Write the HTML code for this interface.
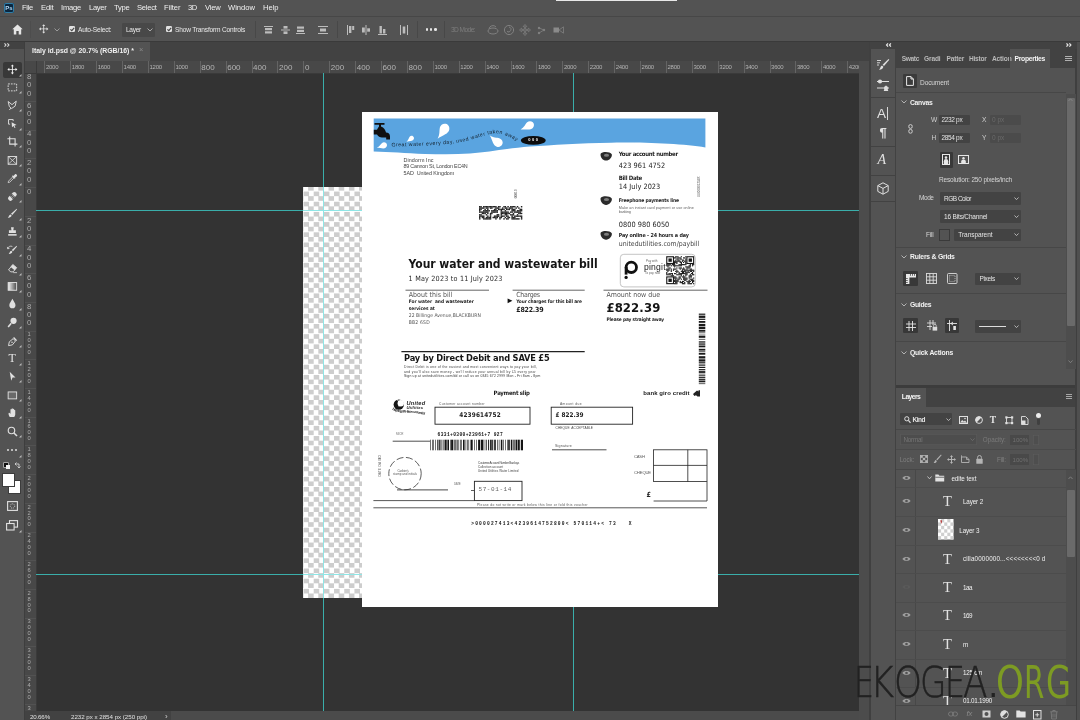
<!DOCTYPE html><html><head><meta charset="utf-8"><title>Italy id.psd</title><style>html,body{margin:0;padding:0}body{width:1080px;height:720px;position:relative;overflow:hidden;background:#535353;font-family:"Liberation Sans",sans-serif}svg{overflow:visible}#root{position:absolute;left:0;top:0;width:1080px;height:720px;will-change:transform;transform:translateZ(0);filter:blur(0.5px)}</style></head><body><div id="root"><div style="position:absolute;left:0px;top:0px;width:1080px;height:17px;background:#535353;"></div>
<div style="position:absolute;left:0px;top:16px;width:1080px;height:1px;background:#474747;"></div>
<div style="position:absolute;left:3.5px;top:3.2px;width:10px;height:10px;background:#0a2740;border-radius:2px;box-shadow:0 0 0 1px #2f7ea8 inset;"></div>
<span id="t1" style="position:absolute;left:5.2px;top:4.95px;font:normal bold 6px/1.15 'Liberation Sans',sans-serif;color:#b9dcf5;white-space:pre;">Ps</span>
<span id="t2" style="position:absolute;left:22px;top:3.93px;font:normal normal 7.6px/1.15 'Liberation Sans',sans-serif;color:#f0f0f0;white-space:pre;letter-spacing:-0.312px;">File</span>
<span id="t3" style="position:absolute;left:41px;top:3.93px;font:normal normal 7.6px/1.15 'Liberation Sans',sans-serif;color:#f0f0f0;white-space:pre;letter-spacing:-0.148px;">Edit</span>
<span id="t4" style="position:absolute;left:61px;top:3.93px;font:normal normal 7.6px/1.15 'Liberation Sans',sans-serif;color:#f0f0f0;white-space:pre;letter-spacing:-0.222px;">Image</span>
<span id="t5" style="position:absolute;left:89px;top:3.93px;font:normal normal 7.6px/1.15 'Liberation Sans',sans-serif;color:#f0f0f0;white-space:pre;letter-spacing:-0.300px;">Layer</span>
<span id="t6" style="position:absolute;left:114px;top:3.93px;font:normal normal 7.6px/1.15 'Liberation Sans',sans-serif;color:#f0f0f0;white-space:pre;letter-spacing:-0.242px;">Type</span>
<span id="t7" style="position:absolute;left:137px;top:3.93px;font:normal normal 7.6px/1.15 'Liberation Sans',sans-serif;color:#f0f0f0;white-space:pre;letter-spacing:-0.268px;">Select</span>
<span id="t8" style="position:absolute;left:164px;top:3.93px;font:normal normal 7.6px/1.15 'Liberation Sans',sans-serif;color:#f0f0f0;white-space:pre;letter-spacing:-0.062px;">Filter</span>
<span id="t9" style="position:absolute;left:188px;top:3.93px;font:normal normal 7.6px/1.15 'Liberation Sans',sans-serif;color:#f0f0f0;white-space:pre;letter-spacing:-0.359px;">3D</span>
<span id="t10" style="position:absolute;left:205px;top:3.93px;font:normal normal 7.6px/1.15 'Liberation Sans',sans-serif;color:#f0f0f0;white-space:pre;letter-spacing:-0.207px;">View</span>
<span id="t11" style="position:absolute;left:228px;top:3.93px;font:normal normal 7.6px/1.15 'Liberation Sans',sans-serif;color:#f0f0f0;white-space:pre;letter-spacing:-0.003px;">Window</span>
<span id="t12" style="position:absolute;left:263px;top:3.93px;font:normal normal 7.6px/1.15 'Liberation Sans',sans-serif;color:#f0f0f0;white-space:pre;letter-spacing:-0.031px;">Help</span>
<div style="position:absolute;left:556px;top:0px;width:121px;height:1px;background:#e8e8e8;"></div>
<div style="position:absolute;left:0px;top:17px;width:1080px;height:24px;background:#535353;"></div>
<svg style="position:absolute;left:12px;top:24px;" width="11" height="11" viewBox="0 0 11 11"><path d="M5.5 0.5 L0.3 5.3 H1.8 V10.5 H4.3 V7 H6.7 V10.5 H9.2 V5.3 H10.7 Z" fill="#e6e6e6"/></svg>
<div style="position:absolute;left:30px;top:21px;width:1px;height:17px;background:#4d4d4d;"></div>
<svg style="position:absolute;left:39px;top:24.2px;" width="9.4" height="9.8" viewBox="0 0 11 11"><path d="M5.5 0 L7.3 2.2 H6 V5 H8.8 V3.7 L11 5.5 L8.8 7.3 V6 H6 V8.8 H7.3 L5.5 11 L3.7 8.8 H5 V6 H2.2 V7.3 L0 5.5 L2.2 3.7 V5 H5 V2.2 H3.7 Z" fill="#e0e0e0"/></svg>
<svg style="position:absolute;left:54px;top:28px;" width="6" height="4" viewBox="0 0 6 4"><path d="M0.5 0.5 L3 3 L5.5 0.5" stroke="#9a9a9a" stroke-width="1" fill="none"/></svg>
<div style="position:absolute;left:69px;top:26px;width:6px;height:6.4px;background:#e2e2e2;border-radius:1.2px;"></div>
<svg style="position:absolute;left:69px;top:26px;" width="6" height="6.4" viewBox="0 0 6 6.4"><path d="M1.4 3.3 L2.8 4.7 L5.2 1.8" stroke="#444" stroke-width="1.1" fill="none"/></svg>
<span id="t13" style="position:absolute;left:78px;top:25.81px;font:normal normal 6.6px/1.15 'Liberation Sans',sans-serif;color:#e8e8e8;white-space:pre;letter-spacing:-0.202px;">Auto-Select:</span>
<div style="position:absolute;left:122px;top:23px;width:33px;height:13.5px;background:#484848;border-radius:1px;"></div>
<span id="t14" style="position:absolute;left:126px;top:26.01px;font:normal normal 6.6px/1.15 'Liberation Sans',sans-serif;color:#e8e8e8;white-space:pre;letter-spacing:-0.300px;">Layer</span>
<svg style="position:absolute;left:147px;top:28px;" width="6" height="4" viewBox="0 0 6 4"><path d="M0.5 0.5 L3 3 L5.5 0.5" stroke="#aaa" stroke-width="1" fill="none"/></svg>
<div style="position:absolute;left:166px;top:26px;width:6px;height:6.4px;background:#e2e2e2;border-radius:1.2px;"></div>
<svg style="position:absolute;left:166px;top:26px;" width="6" height="6.4" viewBox="0 0 6 6.4"><path d="M1.4 3.3 L2.8 4.7 L5.2 1.8" stroke="#444" stroke-width="1.1" fill="none"/></svg>
<span id="t15" style="position:absolute;left:175px;top:25.81px;font:normal normal 6.6px/1.15 'Liberation Sans',sans-serif;color:#e8e8e8;white-space:pre;letter-spacing:-0.191px;">Show Transform Controls</span>
<div style="position:absolute;left:255px;top:21px;width:1px;height:17px;background:#484848;"></div>
<svg style="position:absolute;left:264px;top:24.5px;" width="10" height="10" viewBox="0 0 10 10"><rect x="0" y="1" width="9" height="1" fill="#bcbcbc"/><rect x="1" y="3" width="7" height="2.2" fill="#bcbcbc"/><rect x="1" y="6.3" width="7" height="2.2" fill="#bcbcbc"/></svg>
<svg style="position:absolute;left:280.5px;top:24.5px;" width="10" height="10" viewBox="0 0 10 10"><rect x="0" y="4.5" width="9" height="1" fill="#bcbcbc"/><rect x="2.5" y="1" width="4" height="2.6" fill="#bcbcbc"/><rect x="2.5" y="6.4" width="4" height="2.6" fill="#bcbcbc"/></svg>
<svg style="position:absolute;left:296px;top:24.5px;" width="10" height="10" viewBox="0 0 10 10"><rect x="0" y="8" width="9" height="1" fill="#bcbcbc"/><rect x="1" y="1.5" width="7" height="2.2" fill="#bcbcbc"/><rect x="1" y="4.8" width="7" height="2.2" fill="#bcbcbc"/></svg>
<svg style="position:absolute;left:317.5px;top:24.5px;" width="10" height="10" viewBox="0 0 10 10"><rect x="0" y="1" width="10" height="1" fill="#bcbcbc"/><rect x="0" y="8" width="10" height="1" fill="#bcbcbc"/><rect x="2" y="3.5" width="6" height="3" fill="#bcbcbc"/></svg>
<div style="position:absolute;left:337px;top:21px;width:1px;height:17px;background:#484848;"></div>
<svg style="position:absolute;left:345.5px;top:24.5px;" width="10" height="10" viewBox="0 0 10 10"><rect x="1" y="0" width="1" height="10" fill="#bcbcbc"/><rect x="3" y="1" width="2.4" height="7" fill="#bcbcbc"/><rect x="6.2" y="1" width="2" height="4" fill="#bcbcbc"/></svg>
<svg style="position:absolute;left:361px;top:24.5px;" width="10" height="10" viewBox="0 0 10 10"><rect x="4.5" y="0" width="1" height="10" fill="#bcbcbc"/><rect x="1" y="2.5" width="2.8" height="5" fill="#bcbcbc"/><rect x="6.2" y="3.3" width="2.8" height="3.4" fill="#bcbcbc"/></svg>
<svg style="position:absolute;left:377.5px;top:24.5px;" width="10" height="10" viewBox="0 0 10 10"><rect x="0" y="9" width="9" height="1" fill="#bcbcbc"/><rect x="1.5" y="1" width="2.4" height="7.5" fill="#bcbcbc"/><rect x="5" y="4" width="2.4" height="4.5" fill="#bcbcbc"/></svg>
<svg style="position:absolute;left:398.5px;top:24.5px;" width="10" height="10" viewBox="0 0 10 10"><rect x="1" y="0" width="1" height="10" fill="#bcbcbc"/><rect x="8" y="0" width="1" height="10" fill="#bcbcbc"/><rect x="3.7" y="1.5" width="2.6" height="7" fill="#bcbcbc"/></svg>
<div style="position:absolute;left:417px;top:21px;width:1px;height:17px;background:#484848;"></div>
<div style="position:absolute;left:425.5px;top:28.2px;width:2.6px;height:2.6px;background:#e6e6e6;border-radius:50%;"></div>
<div style="position:absolute;left:429.8px;top:28.2px;width:2.6px;height:2.6px;background:#e6e6e6;border-radius:50%;"></div>
<div style="position:absolute;left:434.1px;top:28.2px;width:2.6px;height:2.6px;background:#e6e6e6;border-radius:50%;"></div>
<div style="position:absolute;left:444px;top:21px;width:1px;height:17px;background:#484848;"></div>
<span id="t16" style="position:absolute;left:451px;top:25.81px;font:normal normal 6.6px/1.15 'Liberation Sans',sans-serif;color:#7d7d7d;white-space:pre;letter-spacing:-0.574px;">3D Mode:</span>
<svg style="position:absolute;left:487px;top:23.5px;" width="12" height="12" viewBox="0 0 12 12"><ellipse cx="6" cy="7" rx="5" ry="3" fill="none" stroke="#808080" stroke-width="1"/><path d="M2 5 A4 4 0 0 1 9 3" fill="none" stroke="#808080" stroke-width="1"/></svg>
<svg style="position:absolute;left:503px;top:23.5px;" width="12" height="12" viewBox="0 0 12 12"><circle cx="6" cy="6" r="4.6" fill="none" stroke="#808080" stroke-width="1"/><path d="M6 3 A2.5 2.5 0 1 1 4 7.5" fill="none" stroke="#808080" stroke-width="1"/></svg>
<svg style="position:absolute;left:519px;top:23.5px;" width="12" height="12" viewBox="0 0 12 12"><path d="M6 0.5 L7.8 2.6 H6.6 V5.4 H9.4 V4.2 L11.5 6 L9.4 7.8 V6.6 H6.6 V9.4 H7.8 L6 11.5 L4.2 9.4 H5.4 V6.6 H2.6 V7.8 L0.5 6 L2.6 4.2 V5.4 H5.4 V2.6 H4.2 Z" fill="none" stroke="#808080" stroke-width="0.8"/></svg>
<svg style="position:absolute;left:537px;top:24.5px;" width="10" height="10" viewBox="0 0 10 10"><circle cx="2" cy="3" r="1.2" fill="#808080"/><circle cx="2" cy="8" r="1.2" fill="#808080"/><circle cx="7" cy="5" r="1.2" fill="#808080"/><path d="M2 3 L7 5 L2 8" stroke="#808080" stroke-width="0.8" fill="none"/></svg>
<svg style="position:absolute;left:552.5px;top:25.5px;" width="11" height="8" viewBox="0 0 11 8"><rect x="0.5" y="1.5" width="5.5" height="5" fill="#8a8a8a"/><path d="M6 4 L10.5 0.8 V7.2 Z" fill="none" stroke="#808080" stroke-width="0.8"/></svg>
<div style="position:absolute;left:0px;top:41px;width:1080px;height:20px;background:#424242;"></div>
<div style="position:absolute;left:0px;top:41px;width:1080px;height:1px;background:#3a3a3a;"></div>
<div style="position:absolute;left:25px;top:42px;width:125px;height:19px;background:#535353;"></div>
<span id="t17" style="position:absolute;left:32px;top:46.63px;font:normal bold 6.9px/1.15 'Liberation Sans',sans-serif;color:#f0f0f0;white-space:pre;letter-spacing:-0.003px;">Italy id.psd @ 20.7% (RGB/16) *</span>
<span id="t18" style="position:absolute;left:139px;top:46.29px;font:normal normal 7.5px/1.15 'Liberation Sans',sans-serif;color:#8a8a8a;white-space:pre;">×</span>
<svg style="position:absolute;left:4px;top:43.2px;" width="6" height="4" viewBox="0 0 6 4"><path d="M0.5 0.3 L2 2 L0.5 3.7 M3.4 0.3 L4.9 2 L3.4 3.7" stroke="#dcdcdc" stroke-width="1.1" fill="none"/></svg>
<div style="position:absolute;left:0px;top:49px;width:25px;height:671px;background:#535353;"></div>
<div style="position:absolute;left:24px;top:42px;width:1px;height:678px;background:#3e3e3e;"></div>
<div style="position:absolute;left:3px;top:61.6px;width:19px;height:16px;background:#383838;border-radius:2px;"></div>
<svg style="position:absolute;left:7.1px;top:64.39999999999999px;" width="10.8" height="10.8" viewBox="0 0 14 14"><path d="M7 0.5 L9 3 H7.6 V6.4 H11 V5 L13.5 7 L11 9 V7.6 H7.6 V11 H9 L7 13.5 L5 11 H6.4 V7.6 H3 V9 L0.5 7 L3 5 V6.4 H6.4 V3 H5 Z" fill="#f0f0f0"/></svg>
<svg style="position:absolute;left:18.8px;top:74.0px;" width="2.3" height="2.3" viewBox="0 0 2.3 2.3"><path d="M2.5 0 V2.5 H0 Z" fill="#bdbdbd"/></svg>
<svg style="position:absolute;left:7.1px;top:81.6px;" width="10.8" height="10.8" viewBox="0 0 14 14"><rect x="1.5" y="2.5" width="11" height="9" fill="none" stroke="#e0e0e0" stroke-width="1.2" stroke-dasharray="2.2 1.4"/></svg>
<svg style="position:absolute;left:18.8px;top:91.2px;" width="2.3" height="2.3" viewBox="0 0 2.3 2.3"><path d="M2.5 0 V2.5 H0 Z" fill="#bdbdbd"/></svg>
<svg style="position:absolute;left:7.1px;top:99.6px;" width="10.8" height="10.8" viewBox="0 0 14 14"><path d="M1.5 2 L6.5 6 L12 1.5 L10.5 8 L6 11 L3 8.5 Z M5 10.5 L3 13" fill="none" stroke="#e0e0e0" stroke-width="1.2"/></svg>
<svg style="position:absolute;left:18.8px;top:109.2px;" width="2.3" height="2.3" viewBox="0 0 2.3 2.3"><path d="M2.5 0 V2.5 H0 Z" fill="#bdbdbd"/></svg>
<svg style="position:absolute;left:7.1px;top:118.1px;" width="10.8" height="10.8" viewBox="0 0 14 14"><path d="M2 2 H8 V4 M2 2 V8 H4" fill="none" stroke="#e0e0e0" stroke-width="1.2"/><path d="M6 5.5 L12.5 9 L9.5 9.8 L11 12.5 L9.8 13 L8.5 10.3 L6.5 12 Z" fill="#e0e0e0"/></svg>
<svg style="position:absolute;left:18.8px;top:127.7px;" width="2.3" height="2.3" viewBox="0 0 2.3 2.3"><path d="M2.5 0 V2.5 H0 Z" fill="#bdbdbd"/></svg>
<svg style="position:absolute;left:7.1px;top:135.6px;" width="10.8" height="10.8" viewBox="0 0 14 14"><path d="M3.5 0.5 V10.5 H13.5 M0.5 3.5 H10.5 V13.5" fill="none" stroke="#e0e0e0" stroke-width="1.4"/></svg>
<svg style="position:absolute;left:18.8px;top:145.2px;" width="2.3" height="2.3" viewBox="0 0 2.3 2.3"><path d="M2.5 0 V2.5 H0 Z" fill="#bdbdbd"/></svg>
<svg style="position:absolute;left:7.1px;top:154.6px;" width="10.8" height="10.8" viewBox="0 0 14 14"><rect x="1.5" y="2" width="11" height="10" fill="none" stroke="#e0e0e0" stroke-width="1.2"/><path d="M1.5 2 L12.5 12 M12.5 2 L1.5 12" stroke="#e0e0e0" stroke-width="1"/></svg>
<svg style="position:absolute;left:18.8px;top:164.2px;" width="2.3" height="2.3" viewBox="0 0 2.3 2.3"><path d="M2.5 0 V2.5 H0 Z" fill="#bdbdbd"/></svg>
<svg style="position:absolute;left:7.1px;top:173.1px;" width="10.8" height="10.8" viewBox="0 0 14 14"><path d="M1.5 12.5 L2 10.5 L7.5 5 L9 6.5 L3.5 12 Z" fill="none" stroke="#e0e0e0" stroke-width="1"/><path d="M7 3.5 L10.5 7 M8.5 5 L11 2.2 A1.4 1.4 0 0 1 12.3 3.5 L9.5 6" stroke="#e0e0e0" stroke-width="1.6" fill="#e0e0e0"/></svg>
<svg style="position:absolute;left:18.8px;top:182.7px;" width="2.3" height="2.3" viewBox="0 0 2.3 2.3"><path d="M2.5 0 V2.5 H0 Z" fill="#bdbdbd"/></svg>
<svg style="position:absolute;left:7.1px;top:190.6px;" width="10.8" height="10.8" viewBox="0 0 14 14"><g transform="rotate(-45 7 7)"><rect x="0.5" y="4" width="13" height="6" rx="2.5" fill="#e0e0e0"/><rect x="5" y="4" width="4" height="6" fill="#535353"/><circle cx="6" cy="6" r="0.5" fill="#e0e0e0"/><circle cx="8" cy="6" r="0.5" fill="#e0e0e0"/><circle cx="6" cy="8" r="0.5" fill="#e0e0e0"/><circle cx="8" cy="8" r="0.5" fill="#e0e0e0"/></g></svg>
<svg style="position:absolute;left:18.8px;top:200.2px;" width="2.3" height="2.3" viewBox="0 0 2.3 2.3"><path d="M2.5 0 V2.5 H0 Z" fill="#bdbdbd"/></svg>
<svg style="position:absolute;left:7.1px;top:208.1px;" width="10.8" height="10.8" viewBox="0 0 14 14"><path d="M12.5 1 L13 1.8 L6.8 9 L5.2 7.6 Z" fill="#e0e0e0"/><path d="M4.6 8.4 L6 9.8 C5.5 12 3 13 1 12.5 C2.5 11.5 2.5 9 4.6 8.4 Z" fill="#e0e0e0"/></svg>
<svg style="position:absolute;left:18.8px;top:217.7px;" width="2.3" height="2.3" viewBox="0 0 2.3 2.3"><path d="M2.5 0 V2.5 H0 Z" fill="#bdbdbd"/></svg>
<svg style="position:absolute;left:7.1px;top:225.6px;" width="10.8" height="10.8" viewBox="0 0 14 14"><path d="M5.2 1.5 H8.8 L8.2 5.5 H11.5 V9 H2.5 V5.5 H5.8 Z" fill="#e0e0e0"/><rect x="1.5" y="10.5" width="11" height="2" fill="#e0e0e0"/></svg>
<svg style="position:absolute;left:18.8px;top:235.2px;" width="2.3" height="2.3" viewBox="0 0 2.3 2.3"><path d="M2.5 0 V2.5 H0 Z" fill="#bdbdbd"/></svg>
<svg style="position:absolute;left:7.1px;top:244.6px;" width="10.8" height="10.8" viewBox="0 0 14 14"><path d="M12.5 1 L13 1.8 L7.8 8 L6.2 6.6 Z" fill="#e0e0e0"/><path d="M5.6 7.4 L7 8.8 C6.5 11 4 12 2 11.5 C3.5 10.5 3.5 8 5.6 7.4 Z" fill="#e0e0e0"/><path d="M1 5 A4 4 0 0 1 7 2 M1 5 L0.5 2.5 M1 5 L3.3 4.2" stroke="#e0e0e0" stroke-width="1" fill="none"/></svg>
<svg style="position:absolute;left:18.8px;top:254.2px;" width="2.3" height="2.3" viewBox="0 0 2.3 2.3"><path d="M2.5 0 V2.5 H0 Z" fill="#bdbdbd"/></svg>
<svg style="position:absolute;left:7.1px;top:263.1px;" width="10.8" height="10.8" viewBox="0 0 14 14"><path d="M7.5 2 L12.5 6 L8 11.5 H5 L2 9 Z" fill="none" stroke="#e0e0e0" stroke-width="1.2"/><path d="M7.5 2 L12.5 6 L9.8 9.3 L4.8 5.3 Z" fill="#e0e0e0"/><path d="M8 12.5 H13" stroke="#e0e0e0" stroke-width="1"/></svg>
<svg style="position:absolute;left:18.8px;top:272.7px;" width="2.3" height="2.3" viewBox="0 0 2.3 2.3"><path d="M2.5 0 V2.5 H0 Z" fill="#bdbdbd"/></svg>
<svg style="position:absolute;left:7.1px;top:280.6px;" width="10.8" height="10.8" viewBox="0 0 14 14"><defs><linearGradient id="gg" x1="0" x2="1"><stop offset="0" stop-color="#f4f4f4"/><stop offset="1" stop-color="#4a4a4a"/></linearGradient></defs><rect x="1.5" y="2" width="11" height="10" fill="url(#gg)" stroke="#e0e0e0" stroke-width="1.2"/></svg>
<svg style="position:absolute;left:18.8px;top:290.2px;" width="2.3" height="2.3" viewBox="0 0 2.3 2.3"><path d="M2.5 0 V2.5 H0 Z" fill="#bdbdbd"/></svg>
<svg style="position:absolute;left:7.1px;top:298.1px;" width="10.8" height="10.8" viewBox="0 0 14 14"><path d="M7 1 C9 5 11 7 11 9.3 A4 4 0 0 1 3 9.3 C3 7 5 5 7 1 Z" fill="#e0e0e0"/></svg>
<svg style="position:absolute;left:18.8px;top:307.7px;" width="2.3" height="2.3" viewBox="0 0 2.3 2.3"><path d="M2.5 0 V2.5 H0 Z" fill="#bdbdbd"/></svg>
<svg style="position:absolute;left:7.1px;top:316.6px;" width="10.8" height="10.8" viewBox="0 0 14 14"><circle cx="8.5" cy="5" r="4" fill="#e0e0e0"/><path d="M5.5 8 L1.5 13" stroke="#e0e0e0" stroke-width="2"/></svg>
<svg style="position:absolute;left:18.8px;top:326.2px;" width="2.3" height="2.3" viewBox="0 0 2.3 2.3"><path d="M2.5 0 V2.5 H0 Z" fill="#bdbdbd"/></svg>
<svg style="position:absolute;left:7.1px;top:335.6px;" width="10.8" height="10.8" viewBox="0 0 14 14"><path d="M2 12.5 L3 7.5 L8 3.5 L11 6.5 L7 11.5 Z" fill="none" stroke="#e0e0e0" stroke-width="1.2"/><circle cx="6.5" cy="8" r="1" fill="#e0e0e0"/><path d="M8.5 2 L12.5 6" stroke="#e0e0e0" stroke-width="1.8"/></svg>
<svg style="position:absolute;left:18.8px;top:345.2px;" width="2.3" height="2.3" viewBox="0 0 2.3 2.3"><path d="M2.5 0 V2.5 H0 Z" fill="#bdbdbd"/></svg>
<span id="t19" style="position:absolute;left:8.6px;top:351.90px;font:normal normal 12px/1.15 'Liberation Serif',serif;color:#e6e6e6;white-space:pre;">T</span>
<svg style="position:absolute;left:19.2px;top:363.0px;" width="2.5" height="2.5" viewBox="0 0 2.5 2.5"><path d="M2.5 0 V2.5 H0 Z" fill="#bdbdbd"/></svg>
<svg style="position:absolute;left:7.1px;top:370.6px;" width="10.8" height="10.8" viewBox="0 0 14 14"><path d="M3.5 1 L11 8.5 H7.2 L5.5 12.5 Z" fill="#e0e0e0"/></svg>
<svg style="position:absolute;left:18.8px;top:380.2px;" width="2.3" height="2.3" viewBox="0 0 2.3 2.3"><path d="M2.5 0 V2.5 H0 Z" fill="#bdbdbd"/></svg>
<svg style="position:absolute;left:7.1px;top:389.6px;" width="10.8" height="10.8" viewBox="0 0 14 14"><rect x="1.5" y="2.5" width="11" height="9" fill="#6a6a6a" stroke="#e0e0e0" stroke-width="1.2"/></svg>
<svg style="position:absolute;left:18.8px;top:399.2px;" width="2.3" height="2.3" viewBox="0 0 2.3 2.3"><path d="M2.5 0 V2.5 H0 Z" fill="#bdbdbd"/></svg>
<svg style="position:absolute;left:7.1px;top:406.6px;" width="10.8" height="10.8" viewBox="0 0 14 14"><path d="M3.5 13 C2 10 1.5 8 2.5 7.5 C3.5 7.2 4 8.5 4.5 9 V3.5 C4.5 2.3 6 2.3 6 3.5 V2.5 C6 1.3 7.6 1.3 7.6 2.5 V3 C7.6 2 9.2 2 9.2 3.2 V4.2 C9.2 3.3 10.7 3.3 10.7 4.5 V9.5 C10.7 11 10 12 9.5 13 Z" fill="#e0e0e0"/></svg>
<svg style="position:absolute;left:18.8px;top:416.2px;" width="2.3" height="2.3" viewBox="0 0 2.3 2.3"><path d="M2.5 0 V2.5 H0 Z" fill="#bdbdbd"/></svg>
<svg style="position:absolute;left:7.1px;top:425.6px;" width="10.8" height="10.8" viewBox="0 0 14 14"><circle cx="5.8" cy="5.8" r="4.2" fill="none" stroke="#e0e0e0" stroke-width="1.5"/><path d="M9 9 L13 13" stroke="#e0e0e0" stroke-width="2"/></svg>
<svg style="position:absolute;left:18.8px;top:435.2px;" width="2.3" height="2.3" viewBox="0 0 2.3 2.3"><path d="M2.5 0 V2.5 H0 Z" fill="#bdbdbd"/></svg>
<div style="position:absolute;left:6.5px;top:448.8px;width:2.5px;height:2.5px;background:#dcdcdc;border-radius:50%;"></div>
<div style="position:absolute;left:10.7px;top:448.8px;width:2.5px;height:2.5px;background:#dcdcdc;border-radius:50%;"></div>
<div style="position:absolute;left:14.9px;top:448.8px;width:2.5px;height:2.5px;background:#dcdcdc;border-radius:50%;"></div>
<svg style="position:absolute;left:19.2px;top:454.5px;" width="2.5" height="2.5" viewBox="0 0 2.5 2.5"><path d="M2.5 0 V2.5 H0 Z" fill="#bdbdbd"/></svg>
<div style="position:absolute;left:4px;top:463px;width:4px;height:4px;background:#111;box-shadow:0 0 0 0.6px #ddd;"></div>
<div style="position:absolute;left:6px;top:465px;width:4px;height:4px;background:#f4f4f4;"></div>
<svg style="position:absolute;left:14px;top:462px;" width="7" height="7" viewBox="0 0 7 7"><path d="M1 2 H5 V6 M1 2 L2.5 0.5 M1 2 L2.5 3.5 M5 6 L3.5 4.5 M5 6 L6.5 4.5" stroke="#d0d0d0" stroke-width="0.9" fill="none"/></svg>
<div style="position:absolute;left:9px;top:481px;width:11px;height:12px;background:#ffffff;box-shadow:0 0 0 1px #3c3c3c;"></div>
<div style="position:absolute;left:3px;top:474px;width:11px;height:12px;background:#ffffff;box-shadow:0 0 0 1px #3c3c3c;"></div>
<svg style="position:absolute;left:6.5px;top:500.5px;" width="11" height="10" viewBox="0 0 11 10"><rect x="0.6" y="0.6" width="9.8" height="8.8" fill="none" stroke="#e0e0e0" stroke-width="1.1"/><circle cx="5.5" cy="5" r="2.2" fill="none" stroke="#e0e0e0" stroke-width="0.8" stroke-dasharray="1 0.8"/></svg>
<svg style="position:absolute;left:6px;top:519.5px;" width="12" height="11" viewBox="0 0 12 11"><rect x="3.5" y="0.6" width="8" height="6.5" fill="none" stroke="#e0e0e0" stroke-width="1.1"/><rect x="0.6" y="3.5" width="7.5" height="6.5" fill="#535353" stroke="#e0e0e0" stroke-width="1.1"/></svg>
<svg style="position:absolute;left:19.2px;top:529.5px;" width="2.5" height="2.5" viewBox="0 0 2.5 2.5"><path d="M2.5 0 V2.5 H0 Z" fill="#bdbdbd"/></svg>
<div style="position:absolute;left:25px;top:61px;width:834px;height:651px;background:#333333;"></div>
<div style="position:absolute;left:25px;top:61px;width:834px;height:12px;background:#484848;"></div>
<div style="position:absolute;left:25px;top:61px;width:11px;height:651px;background:#484848;"></div>
<div style="position:absolute;left:25px;top:72.5px;width:834px;height:0.8px;background:#3a3a3a;"></div>
<div style="position:absolute;left:35.5px;top:61px;width:0.8px;height:651px;background:#3a3a3a;"></div>
<div style="position:absolute;left:44.3px;top:61px;width:0.8px;height:12px;background:#646464;"></div>
<span id="t20" style="position:absolute;left:45.9px;top:63.95px;font:normal normal 6px/1.15 'Liberation Sans',sans-serif;color:#b4b4b4;white-space:pre;letter-spacing:-0.25px;">2000</span>
<div style="position:absolute;left:70.2px;top:61px;width:0.8px;height:12px;background:#646464;"></div>
<span id="t21" style="position:absolute;left:71.8px;top:63.95px;font:normal normal 6px/1.15 'Liberation Sans',sans-serif;color:#b4b4b4;white-space:pre;letter-spacing:-0.25px;">1800</span>
<div style="position:absolute;left:96.1px;top:61px;width:0.8px;height:12px;background:#646464;"></div>
<span id="t22" style="position:absolute;left:97.7px;top:63.95px;font:normal normal 6px/1.15 'Liberation Sans',sans-serif;color:#b4b4b4;white-space:pre;letter-spacing:-0.25px;">1600</span>
<div style="position:absolute;left:122.0px;top:61px;width:0.8px;height:12px;background:#646464;"></div>
<span id="t23" style="position:absolute;left:123.6px;top:63.95px;font:normal normal 6px/1.15 'Liberation Sans',sans-serif;color:#b4b4b4;white-space:pre;letter-spacing:-0.25px;">1400</span>
<div style="position:absolute;left:147.9px;top:61px;width:0.8px;height:12px;background:#646464;"></div>
<span id="t24" style="position:absolute;left:149.5px;top:63.95px;font:normal normal 6px/1.15 'Liberation Sans',sans-serif;color:#b4b4b4;white-space:pre;letter-spacing:-0.25px;">1200</span>
<div style="position:absolute;left:173.8px;top:61px;width:0.8px;height:12px;background:#646464;"></div>
<span id="t25" style="position:absolute;left:175.4px;top:63.95px;font:normal normal 6px/1.15 'Liberation Sans',sans-serif;color:#b4b4b4;white-space:pre;letter-spacing:-0.25px;">1000</span>
<div style="position:absolute;left:199.7px;top:61px;width:0.8px;height:12px;background:#646464;"></div>
<span id="t26" style="position:absolute;left:201.3px;top:62.80px;font:normal normal 8px/1.15 'Liberation Sans',sans-serif;color:#b4b4b4;white-space:pre;">800</span>
<div style="position:absolute;left:225.6px;top:61px;width:0.8px;height:12px;background:#646464;"></div>
<span id="t27" style="position:absolute;left:227.2px;top:62.80px;font:normal normal 8px/1.15 'Liberation Sans',sans-serif;color:#b4b4b4;white-space:pre;">600</span>
<div style="position:absolute;left:251.5px;top:61px;width:0.8px;height:12px;background:#646464;"></div>
<span id="t28" style="position:absolute;left:253.1px;top:62.80px;font:normal normal 8px/1.15 'Liberation Sans',sans-serif;color:#b4b4b4;white-space:pre;">400</span>
<div style="position:absolute;left:277.4px;top:61px;width:0.8px;height:12px;background:#646464;"></div>
<span id="t29" style="position:absolute;left:279.0px;top:62.80px;font:normal normal 8px/1.15 'Liberation Sans',sans-serif;color:#b4b4b4;white-space:pre;">200</span>
<div style="position:absolute;left:303.3px;top:61px;width:0.8px;height:12px;background:#646464;"></div>
<span id="t30" style="position:absolute;left:304.9px;top:62.80px;font:normal normal 8px/1.15 'Liberation Sans',sans-serif;color:#b4b4b4;white-space:pre;">0</span>
<div style="position:absolute;left:329.2px;top:61px;width:0.8px;height:12px;background:#646464;"></div>
<span id="t31" style="position:absolute;left:330.8px;top:62.80px;font:normal normal 8px/1.15 'Liberation Sans',sans-serif;color:#b4b4b4;white-space:pre;">200</span>
<div style="position:absolute;left:355.1px;top:61px;width:0.8px;height:12px;background:#646464;"></div>
<span id="t32" style="position:absolute;left:356.7px;top:62.80px;font:normal normal 8px/1.15 'Liberation Sans',sans-serif;color:#b4b4b4;white-space:pre;">400</span>
<div style="position:absolute;left:381.0px;top:61px;width:0.8px;height:12px;background:#646464;"></div>
<span id="t33" style="position:absolute;left:382.6px;top:62.80px;font:normal normal 8px/1.15 'Liberation Sans',sans-serif;color:#b4b4b4;white-space:pre;">600</span>
<div style="position:absolute;left:406.9px;top:61px;width:0.8px;height:12px;background:#646464;"></div>
<span id="t34" style="position:absolute;left:408.5px;top:62.80px;font:normal normal 8px/1.15 'Liberation Sans',sans-serif;color:#b4b4b4;white-space:pre;">800</span>
<div style="position:absolute;left:432.8px;top:61px;width:0.8px;height:12px;background:#646464;"></div>
<span id="t35" style="position:absolute;left:434.4px;top:63.95px;font:normal normal 6px/1.15 'Liberation Sans',sans-serif;color:#b4b4b4;white-space:pre;letter-spacing:-0.25px;">1000</span>
<div style="position:absolute;left:458.7px;top:61px;width:0.8px;height:12px;background:#646464;"></div>
<span id="t36" style="position:absolute;left:460.3px;top:63.95px;font:normal normal 6px/1.15 'Liberation Sans',sans-serif;color:#b4b4b4;white-space:pre;letter-spacing:-0.25px;">1200</span>
<div style="position:absolute;left:484.6px;top:61px;width:0.8px;height:12px;background:#646464;"></div>
<span id="t37" style="position:absolute;left:486.2px;top:63.95px;font:normal normal 6px/1.15 'Liberation Sans',sans-serif;color:#b4b4b4;white-space:pre;letter-spacing:-0.25px;">1400</span>
<div style="position:absolute;left:510.5px;top:61px;width:0.8px;height:12px;background:#646464;"></div>
<span id="t38" style="position:absolute;left:512.1px;top:63.95px;font:normal normal 6px/1.15 'Liberation Sans',sans-serif;color:#b4b4b4;white-space:pre;letter-spacing:-0.25px;">1600</span>
<div style="position:absolute;left:536.4px;top:61px;width:0.8px;height:12px;background:#646464;"></div>
<span id="t39" style="position:absolute;left:538.0px;top:63.95px;font:normal normal 6px/1.15 'Liberation Sans',sans-serif;color:#b4b4b4;white-space:pre;letter-spacing:-0.25px;">1800</span>
<div style="position:absolute;left:562.3px;top:61px;width:0.8px;height:12px;background:#646464;"></div>
<span id="t40" style="position:absolute;left:563.9px;top:63.95px;font:normal normal 6px/1.15 'Liberation Sans',sans-serif;color:#b4b4b4;white-space:pre;letter-spacing:-0.25px;">2000</span>
<div style="position:absolute;left:588.2px;top:61px;width:0.8px;height:12px;background:#646464;"></div>
<span id="t41" style="position:absolute;left:589.8px;top:63.95px;font:normal normal 6px/1.15 'Liberation Sans',sans-serif;color:#b4b4b4;white-space:pre;letter-spacing:-0.25px;">2200</span>
<div style="position:absolute;left:614.1px;top:61px;width:0.8px;height:12px;background:#646464;"></div>
<span id="t42" style="position:absolute;left:615.7px;top:63.95px;font:normal normal 6px/1.15 'Liberation Sans',sans-serif;color:#b4b4b4;white-space:pre;letter-spacing:-0.25px;">2400</span>
<div style="position:absolute;left:640.0px;top:61px;width:0.8px;height:12px;background:#646464;"></div>
<span id="t43" style="position:absolute;left:641.6px;top:63.95px;font:normal normal 6px/1.15 'Liberation Sans',sans-serif;color:#b4b4b4;white-space:pre;letter-spacing:-0.25px;">2600</span>
<div style="position:absolute;left:665.9px;top:61px;width:0.8px;height:12px;background:#646464;"></div>
<span id="t44" style="position:absolute;left:667.5px;top:63.95px;font:normal normal 6px/1.15 'Liberation Sans',sans-serif;color:#b4b4b4;white-space:pre;letter-spacing:-0.25px;">2800</span>
<div style="position:absolute;left:691.8px;top:61px;width:0.8px;height:12px;background:#646464;"></div>
<span id="t45" style="position:absolute;left:693.4px;top:63.95px;font:normal normal 6px/1.15 'Liberation Sans',sans-serif;color:#b4b4b4;white-space:pre;letter-spacing:-0.25px;">3000</span>
<div style="position:absolute;left:717.7px;top:61px;width:0.8px;height:12px;background:#646464;"></div>
<span id="t46" style="position:absolute;left:719.3px;top:63.95px;font:normal normal 6px/1.15 'Liberation Sans',sans-serif;color:#b4b4b4;white-space:pre;letter-spacing:-0.25px;">3200</span>
<div style="position:absolute;left:743.6px;top:61px;width:0.8px;height:12px;background:#646464;"></div>
<span id="t47" style="position:absolute;left:745.2px;top:63.95px;font:normal normal 6px/1.15 'Liberation Sans',sans-serif;color:#b4b4b4;white-space:pre;letter-spacing:-0.25px;">3400</span>
<div style="position:absolute;left:769.5px;top:61px;width:0.8px;height:12px;background:#646464;"></div>
<span id="t48" style="position:absolute;left:771.1px;top:63.95px;font:normal normal 6px/1.15 'Liberation Sans',sans-serif;color:#b4b4b4;white-space:pre;letter-spacing:-0.25px;">3600</span>
<div style="position:absolute;left:795.4px;top:61px;width:0.8px;height:12px;background:#646464;"></div>
<span id="t49" style="position:absolute;left:797.0px;top:63.95px;font:normal normal 6px/1.15 'Liberation Sans',sans-serif;color:#b4b4b4;white-space:pre;letter-spacing:-0.25px;">3800</span>
<div style="position:absolute;left:821.3px;top:61px;width:0.8px;height:12px;background:#646464;"></div>
<span id="t50" style="position:absolute;left:822.9px;top:63.95px;font:normal normal 6px/1.15 'Liberation Sans',sans-serif;color:#b4b4b4;white-space:pre;letter-spacing:-0.25px;">4000</span>
<div style="position:absolute;left:847.2px;top:61px;width:0.8px;height:12px;background:#646464;"></div>
<span id="t51" style="position:absolute;left:848.8px;top:63.95px;font:normal normal 6px/1.15 'Liberation Sans',sans-serif;color:#b4b4b4;white-space:pre;letter-spacing:-0.25px;">4200</span>
<span id="t52" style="position:absolute;left:26.9px;top:73.02px;font:normal normal 7.8px/1.15 'Liberation Sans',sans-serif;color:#adadad;white-space:pre;">8</span>
<span id="t53" style="position:absolute;left:26.9px;top:81.31px;font:normal normal 7.8px/1.15 'Liberation Sans',sans-serif;color:#adadad;white-space:pre;">0</span>
<span id="t54" style="position:absolute;left:26.9px;top:89.61px;font:normal normal 7.8px/1.15 'Liberation Sans',sans-serif;color:#adadad;white-space:pre;">0</span>
<div style="position:absolute;left:25px;top:101.0px;width:11px;height:0.8px;background:#525252;"></div>
<span id="t55" style="position:absolute;left:26.9px;top:101.72px;font:normal normal 7.8px/1.15 'Liberation Sans',sans-serif;color:#adadad;white-space:pre;">6</span>
<span id="t56" style="position:absolute;left:26.9px;top:110.02px;font:normal normal 7.8px/1.15 'Liberation Sans',sans-serif;color:#adadad;white-space:pre;">0</span>
<span id="t57" style="position:absolute;left:26.9px;top:118.31px;font:normal normal 7.8px/1.15 'Liberation Sans',sans-serif;color:#adadad;white-space:pre;">0</span>
<div style="position:absolute;left:25px;top:129.7px;width:11px;height:0.8px;background:#525252;"></div>
<span id="t58" style="position:absolute;left:26.9px;top:130.42px;font:normal normal 7.8px/1.15 'Liberation Sans',sans-serif;color:#adadad;white-space:pre;">4</span>
<span id="t59" style="position:absolute;left:26.9px;top:138.71px;font:normal normal 7.8px/1.15 'Liberation Sans',sans-serif;color:#adadad;white-space:pre;">0</span>
<span id="t60" style="position:absolute;left:26.9px;top:147.01px;font:normal normal 7.8px/1.15 'Liberation Sans',sans-serif;color:#adadad;white-space:pre;">0</span>
<div style="position:absolute;left:25px;top:158.4px;width:11px;height:0.8px;background:#525252;"></div>
<span id="t61" style="position:absolute;left:26.9px;top:159.12px;font:normal normal 7.8px/1.15 'Liberation Sans',sans-serif;color:#adadad;white-space:pre;">2</span>
<span id="t62" style="position:absolute;left:26.9px;top:167.42px;font:normal normal 7.8px/1.15 'Liberation Sans',sans-serif;color:#adadad;white-space:pre;">0</span>
<span id="t63" style="position:absolute;left:26.9px;top:175.71px;font:normal normal 7.8px/1.15 'Liberation Sans',sans-serif;color:#adadad;white-space:pre;">0</span>
<div style="position:absolute;left:25px;top:187.1px;width:11px;height:0.8px;background:#525252;"></div>
<span id="t64" style="position:absolute;left:26.9px;top:187.81px;font:normal normal 7.8px/1.15 'Liberation Sans',sans-serif;color:#adadad;white-space:pre;">0</span>
<div style="position:absolute;left:25px;top:215.8px;width:11px;height:0.8px;background:#525252;"></div>
<span id="t65" style="position:absolute;left:26.9px;top:216.51px;font:normal normal 7.8px/1.15 'Liberation Sans',sans-serif;color:#adadad;white-space:pre;">2</span>
<span id="t66" style="position:absolute;left:26.9px;top:224.81px;font:normal normal 7.8px/1.15 'Liberation Sans',sans-serif;color:#adadad;white-space:pre;">0</span>
<span id="t67" style="position:absolute;left:26.9px;top:233.12px;font:normal normal 7.8px/1.15 'Liberation Sans',sans-serif;color:#adadad;white-space:pre;">0</span>
<div style="position:absolute;left:25px;top:244.5px;width:11px;height:0.8px;background:#525252;"></div>
<span id="t68" style="position:absolute;left:26.9px;top:245.21px;font:normal normal 7.8px/1.15 'Liberation Sans',sans-serif;color:#adadad;white-space:pre;">4</span>
<span id="t69" style="position:absolute;left:26.9px;top:253.51px;font:normal normal 7.8px/1.15 'Liberation Sans',sans-serif;color:#adadad;white-space:pre;">0</span>
<span id="t70" style="position:absolute;left:26.9px;top:261.81px;font:normal normal 7.8px/1.15 'Liberation Sans',sans-serif;color:#adadad;white-space:pre;">0</span>
<div style="position:absolute;left:25px;top:273.2px;width:11px;height:0.8px;background:#525252;"></div>
<span id="t71" style="position:absolute;left:26.9px;top:273.91px;font:normal normal 7.8px/1.15 'Liberation Sans',sans-serif;color:#adadad;white-space:pre;">6</span>
<span id="t72" style="position:absolute;left:26.9px;top:282.21px;font:normal normal 7.8px/1.15 'Liberation Sans',sans-serif;color:#adadad;white-space:pre;">0</span>
<span id="t73" style="position:absolute;left:26.9px;top:290.51px;font:normal normal 7.8px/1.15 'Liberation Sans',sans-serif;color:#adadad;white-space:pre;">0</span>
<div style="position:absolute;left:25px;top:301.9px;width:11px;height:0.8px;background:#525252;"></div>
<span id="t74" style="position:absolute;left:26.9px;top:302.62px;font:normal normal 7.8px/1.15 'Liberation Sans',sans-serif;color:#adadad;white-space:pre;">8</span>
<span id="t75" style="position:absolute;left:26.9px;top:310.91px;font:normal normal 7.8px/1.15 'Liberation Sans',sans-serif;color:#adadad;white-space:pre;">0</span>
<span id="t76" style="position:absolute;left:26.9px;top:319.21px;font:normal normal 7.8px/1.15 'Liberation Sans',sans-serif;color:#adadad;white-space:pre;">0</span>
<div style="position:absolute;left:25px;top:330.6px;width:11px;height:0.8px;background:#525252;"></div>
<span id="t77" style="position:absolute;left:27.4px;top:331.47px;font:normal normal 5.8px/1.15 'Liberation Sans',sans-serif;color:#adadad;white-space:pre;">1</span>
<span id="t78" style="position:absolute;left:27.4px;top:337.37px;font:normal normal 5.8px/1.15 'Liberation Sans',sans-serif;color:#adadad;white-space:pre;">0</span>
<span id="t79" style="position:absolute;left:27.4px;top:343.27px;font:normal normal 5.8px/1.15 'Liberation Sans',sans-serif;color:#adadad;white-space:pre;">0</span>
<span id="t80" style="position:absolute;left:27.4px;top:349.17px;font:normal normal 5.8px/1.15 'Liberation Sans',sans-serif;color:#adadad;white-space:pre;">0</span>
<div style="position:absolute;left:25px;top:359.3px;width:11px;height:0.8px;background:#525252;"></div>
<span id="t81" style="position:absolute;left:27.4px;top:360.17px;font:normal normal 5.8px/1.15 'Liberation Sans',sans-serif;color:#adadad;white-space:pre;">1</span>
<span id="t82" style="position:absolute;left:27.4px;top:366.06px;font:normal normal 5.8px/1.15 'Liberation Sans',sans-serif;color:#adadad;white-space:pre;">2</span>
<span id="t83" style="position:absolute;left:27.4px;top:371.97px;font:normal normal 5.8px/1.15 'Liberation Sans',sans-serif;color:#adadad;white-space:pre;">0</span>
<span id="t84" style="position:absolute;left:27.4px;top:377.87px;font:normal normal 5.8px/1.15 'Liberation Sans',sans-serif;color:#adadad;white-space:pre;">0</span>
<div style="position:absolute;left:25px;top:388.0px;width:11px;height:0.8px;background:#525252;"></div>
<span id="t85" style="position:absolute;left:27.4px;top:388.87px;font:normal normal 5.8px/1.15 'Liberation Sans',sans-serif;color:#adadad;white-space:pre;">1</span>
<span id="t86" style="position:absolute;left:27.4px;top:394.77px;font:normal normal 5.8px/1.15 'Liberation Sans',sans-serif;color:#adadad;white-space:pre;">4</span>
<span id="t87" style="position:absolute;left:27.4px;top:400.67px;font:normal normal 5.8px/1.15 'Liberation Sans',sans-serif;color:#adadad;white-space:pre;">0</span>
<span id="t88" style="position:absolute;left:27.4px;top:406.56px;font:normal normal 5.8px/1.15 'Liberation Sans',sans-serif;color:#adadad;white-space:pre;">0</span>
<div style="position:absolute;left:25px;top:416.7px;width:11px;height:0.8px;background:#525252;"></div>
<span id="t89" style="position:absolute;left:27.4px;top:417.56px;font:normal normal 5.8px/1.15 'Liberation Sans',sans-serif;color:#adadad;white-space:pre;">1</span>
<span id="t90" style="position:absolute;left:27.4px;top:423.47px;font:normal normal 5.8px/1.15 'Liberation Sans',sans-serif;color:#adadad;white-space:pre;">6</span>
<span id="t91" style="position:absolute;left:27.4px;top:429.37px;font:normal normal 5.8px/1.15 'Liberation Sans',sans-serif;color:#adadad;white-space:pre;">0</span>
<span id="t92" style="position:absolute;left:27.4px;top:435.27px;font:normal normal 5.8px/1.15 'Liberation Sans',sans-serif;color:#adadad;white-space:pre;">0</span>
<div style="position:absolute;left:25px;top:445.4px;width:11px;height:0.8px;background:#525252;"></div>
<span id="t93" style="position:absolute;left:27.4px;top:446.27px;font:normal normal 5.8px/1.15 'Liberation Sans',sans-serif;color:#adadad;white-space:pre;">1</span>
<span id="t94" style="position:absolute;left:27.4px;top:452.17px;font:normal normal 5.8px/1.15 'Liberation Sans',sans-serif;color:#adadad;white-space:pre;">8</span>
<span id="t95" style="position:absolute;left:27.4px;top:458.06px;font:normal normal 5.8px/1.15 'Liberation Sans',sans-serif;color:#adadad;white-space:pre;">0</span>
<span id="t96" style="position:absolute;left:27.4px;top:463.97px;font:normal normal 5.8px/1.15 'Liberation Sans',sans-serif;color:#adadad;white-space:pre;">0</span>
<div style="position:absolute;left:25px;top:474.1px;width:11px;height:0.8px;background:#525252;"></div>
<span id="t97" style="position:absolute;left:27.4px;top:474.97px;font:normal normal 5.8px/1.15 'Liberation Sans',sans-serif;color:#adadad;white-space:pre;">2</span>
<span id="t98" style="position:absolute;left:27.4px;top:480.87px;font:normal normal 5.8px/1.15 'Liberation Sans',sans-serif;color:#adadad;white-space:pre;">0</span>
<span id="t99" style="position:absolute;left:27.4px;top:486.77px;font:normal normal 5.8px/1.15 'Liberation Sans',sans-serif;color:#adadad;white-space:pre;">0</span>
<span id="t100" style="position:absolute;left:27.4px;top:492.67px;font:normal normal 5.8px/1.15 'Liberation Sans',sans-serif;color:#adadad;white-space:pre;">0</span>
<div style="position:absolute;left:25px;top:502.8px;width:11px;height:0.8px;background:#525252;"></div>
<span id="t101" style="position:absolute;left:27.4px;top:503.67px;font:normal normal 5.8px/1.15 'Liberation Sans',sans-serif;color:#adadad;white-space:pre;">2</span>
<span id="t102" style="position:absolute;left:27.4px;top:509.56px;font:normal normal 5.8px/1.15 'Liberation Sans',sans-serif;color:#adadad;white-space:pre;">2</span>
<span id="t103" style="position:absolute;left:27.4px;top:515.46px;font:normal normal 5.8px/1.15 'Liberation Sans',sans-serif;color:#adadad;white-space:pre;">0</span>
<span id="t104" style="position:absolute;left:27.4px;top:521.37px;font:normal normal 5.8px/1.15 'Liberation Sans',sans-serif;color:#adadad;white-space:pre;">0</span>
<div style="position:absolute;left:25px;top:531.5px;width:11px;height:0.8px;background:#525252;"></div>
<span id="t105" style="position:absolute;left:27.4px;top:532.37px;font:normal normal 5.8px/1.15 'Liberation Sans',sans-serif;color:#adadad;white-space:pre;">2</span>
<span id="t106" style="position:absolute;left:27.4px;top:538.26px;font:normal normal 5.8px/1.15 'Liberation Sans',sans-serif;color:#adadad;white-space:pre;">4</span>
<span id="t107" style="position:absolute;left:27.4px;top:544.16px;font:normal normal 5.8px/1.15 'Liberation Sans',sans-serif;color:#adadad;white-space:pre;">0</span>
<span id="t108" style="position:absolute;left:27.4px;top:550.06px;font:normal normal 5.8px/1.15 'Liberation Sans',sans-serif;color:#adadad;white-space:pre;">0</span>
<div style="position:absolute;left:25px;top:560.2px;width:11px;height:0.8px;background:#525252;"></div>
<span id="t109" style="position:absolute;left:27.4px;top:561.06px;font:normal normal 5.8px/1.15 'Liberation Sans',sans-serif;color:#adadad;white-space:pre;">2</span>
<span id="t110" style="position:absolute;left:27.4px;top:566.96px;font:normal normal 5.8px/1.15 'Liberation Sans',sans-serif;color:#adadad;white-space:pre;">6</span>
<span id="t111" style="position:absolute;left:27.4px;top:572.87px;font:normal normal 5.8px/1.15 'Liberation Sans',sans-serif;color:#adadad;white-space:pre;">0</span>
<span id="t112" style="position:absolute;left:27.4px;top:578.76px;font:normal normal 5.8px/1.15 'Liberation Sans',sans-serif;color:#adadad;white-space:pre;">0</span>
<div style="position:absolute;left:25px;top:588.9px;width:11px;height:0.8px;background:#525252;"></div>
<span id="t113" style="position:absolute;left:27.4px;top:589.76px;font:normal normal 5.8px/1.15 'Liberation Sans',sans-serif;color:#adadad;white-space:pre;">2</span>
<span id="t114" style="position:absolute;left:27.4px;top:595.66px;font:normal normal 5.8px/1.15 'Liberation Sans',sans-serif;color:#adadad;white-space:pre;">8</span>
<span id="t115" style="position:absolute;left:27.4px;top:601.56px;font:normal normal 5.8px/1.15 'Liberation Sans',sans-serif;color:#adadad;white-space:pre;">0</span>
<span id="t116" style="position:absolute;left:27.4px;top:607.46px;font:normal normal 5.8px/1.15 'Liberation Sans',sans-serif;color:#adadad;white-space:pre;">0</span>
<div style="position:absolute;left:25px;top:617.6px;width:11px;height:0.8px;background:#525252;"></div>
<span id="t117" style="position:absolute;left:27.4px;top:618.46px;font:normal normal 5.8px/1.15 'Liberation Sans',sans-serif;color:#adadad;white-space:pre;">3</span>
<span id="t118" style="position:absolute;left:27.4px;top:624.37px;font:normal normal 5.8px/1.15 'Liberation Sans',sans-serif;color:#adadad;white-space:pre;">0</span>
<span id="t119" style="position:absolute;left:27.4px;top:630.26px;font:normal normal 5.8px/1.15 'Liberation Sans',sans-serif;color:#adadad;white-space:pre;">0</span>
<span id="t120" style="position:absolute;left:27.4px;top:636.16px;font:normal normal 5.8px/1.15 'Liberation Sans',sans-serif;color:#adadad;white-space:pre;">0</span>
<div style="position:absolute;left:25px;top:646.3px;width:11px;height:0.8px;background:#525252;"></div>
<span id="t121" style="position:absolute;left:27.4px;top:647.16px;font:normal normal 5.8px/1.15 'Liberation Sans',sans-serif;color:#adadad;white-space:pre;">3</span>
<span id="t122" style="position:absolute;left:27.4px;top:653.06px;font:normal normal 5.8px/1.15 'Liberation Sans',sans-serif;color:#adadad;white-space:pre;">2</span>
<span id="t123" style="position:absolute;left:27.4px;top:658.96px;font:normal normal 5.8px/1.15 'Liberation Sans',sans-serif;color:#adadad;white-space:pre;">0</span>
<span id="t124" style="position:absolute;left:27.4px;top:664.87px;font:normal normal 5.8px/1.15 'Liberation Sans',sans-serif;color:#adadad;white-space:pre;">0</span>
<div style="position:absolute;left:25px;top:675.0px;width:11px;height:0.8px;background:#525252;"></div>
<span id="t125" style="position:absolute;left:27.4px;top:675.87px;font:normal normal 5.8px/1.15 'Liberation Sans',sans-serif;color:#adadad;white-space:pre;">3</span>
<span id="t126" style="position:absolute;left:27.4px;top:681.76px;font:normal normal 5.8px/1.15 'Liberation Sans',sans-serif;color:#adadad;white-space:pre;">4</span>
<span id="t127" style="position:absolute;left:27.4px;top:687.66px;font:normal normal 5.8px/1.15 'Liberation Sans',sans-serif;color:#adadad;white-space:pre;">0</span>
<span id="t128" style="position:absolute;left:27.4px;top:693.56px;font:normal normal 5.8px/1.15 'Liberation Sans',sans-serif;color:#adadad;white-space:pre;">0</span>
<div style="position:absolute;left:25px;top:703.7px;width:11px;height:0.8px;background:#525252;"></div>
<span id="t129" style="position:absolute;left:27.4px;top:704.56px;font:normal normal 5.8px/1.15 'Liberation Sans',sans-serif;color:#adadad;white-space:pre;">3</span>
<div style="position:absolute;left:25px;top:711px;width:834px;height:9px;background:#4b4b4b;"></div>
<div style="position:absolute;left:25px;top:711px;width:146px;height:9px;background:#424242;"></div>
<span id="t130" style="position:absolute;left:30px;top:713.03px;font:normal normal 6.2px/1.15 'Liberation Sans',sans-serif;color:#e0e0e0;white-space:pre;letter-spacing:-0.167px;">20.66%</span>
<span id="t131" style="position:absolute;left:71px;top:713.03px;font:normal normal 6.2px/1.15 'Liberation Sans',sans-serif;color:#e0e0e0;white-space:pre;letter-spacing:-0.027px;">2232 px x 2854 px (250 ppi)</span>
<span id="t132" style="position:absolute;left:165px;top:711.80px;font:normal normal 8px/1.15 'Liberation Sans',sans-serif;color:#cfcfcf;white-space:pre;">›</span>
<div style="position:absolute;left:36px;top:209.6px;width:823px;height:1.2px;background:#3aaeaa;"></div>
<div style="position:absolute;left:36px;top:574.2px;width:823px;height:1.2px;background:#3aaeaa;"></div>
<div style="position:absolute;left:323px;top:73px;width:1.2px;height:638px;background:#3aaeaa;"></div>
<div style="position:absolute;left:572.6px;top:73px;width:1.2px;height:638px;background:#3aaeaa;"></div>
<div style="position:absolute;left:859px;top:42px;width:221px;height:678px;background:#424242;"></div>
<div style="position:absolute;left:859px;top:61px;width:10px;height:659px;background:#4c4c4c;"></div>
<div style="position:absolute;left:869px;top:42px;width:2px;height:678px;background:#404040;"></div>
<div style="position:absolute;left:870px;top:42px;width:210px;height:7px;background:#424242;"></div>
<svg style="position:absolute;left:885.5px;top:42.8px;" width="6" height="4" viewBox="0 0 6 4"><path d="M2 0.3 L0.5 2 L2 3.7 M4.9 0.3 L3.4 2 L4.9 3.7" stroke="#e8e8e8" stroke-width="1.2" fill="none"/></svg>
<svg style="position:absolute;left:1066px;top:42.8px;" width="6" height="4" viewBox="0 0 6 4"><path d="M0.5 0.3 L2 2 L0.5 3.7 M3.4 0.3 L4.9 2 L3.4 3.7" stroke="#e8e8e8" stroke-width="1.2" fill="none"/></svg>
<div style="position:absolute;left:870.6px;top:48.5px;width:24.9px;height:671.5px;background:#535353;"></div>
<div style="position:absolute;left:895.5px;top:49px;width:1px;height:671px;background:#3c3c3c;"></div>
<div style="position:absolute;left:871px;top:97px;width:24px;height:1.2px;background:#424242;"></div>
<div style="position:absolute;left:871px;top:145.5px;width:24px;height:1.2px;background:#424242;"></div>
<div style="position:absolute;left:871px;top:175px;width:24px;height:1.2px;background:#424242;"></div>
<div style="position:absolute;left:871px;top:201px;width:24px;height:1.2px;background:#424242;"></div>
<svg style="position:absolute;left:876px;top:57.5px;" width="14" height="14" viewBox="0 0 14 14"><path d="M1 2.5 H5 M1 4.8 H4 M1 7 H3" stroke="#e0e0e0" stroke-width="0.9"/><path d="M12.5 1 L13.3 1.8 L8 8 L6.6 6.8 Z" fill="#e0e0e0"/><path d="M6 7.5 L7.4 8.8 C7 11 5 12 3 11.8 C4.4 10.8 4.3 8.3 6 7.5 Z" fill="#e0e0e0"/></svg>
<svg style="position:absolute;left:876px;top:78px;" width="14" height="14" viewBox="0 0 14 14"><path d="M1 3.5 H13 M1 10 H13" stroke="#e0e0e0" stroke-width="1.1"/><circle cx="4" cy="3.5" r="2.1" fill="#e0e0e0"/><path d="M10 7 L12.3 13 H7.7 Z" fill="#e0e0e0"/><circle cx="10" cy="10" r="2" fill="#e0e0e0"/></svg>
<span id="t133" style="position:absolute;left:877px;top:105.74px;font:normal normal 13.5px/1.15 'Liberation Sans',sans-serif;color:#e0e0e0;white-space:pre;">A</span>
<div style="position:absolute;left:887.2px;top:106.5px;width:1px;height:13px;background:#d8d8d8;"></div>
<span id="t134" style="position:absolute;left:879.5px;top:125.53px;font:normal bold 13px/1.15 'Liberation Sans',sans-serif;color:#e0e0e0;white-space:pre;">¶</span>
<span id="t135" style="position:absolute;left:877.5px;top:152.45px;font:italic normal 14px/1.15 'Liberation Serif',serif;color:#e0e0e0;white-space:pre;">A</span>
<svg style="position:absolute;left:877px;top:182px;" width="12" height="13" viewBox="0 0 12 13"><path d="M6 0.8 L11.2 3.6 V9.4 L6 12.2 L0.8 9.4 V3.6 Z M0.8 3.6 L6 6.4 L11.2 3.6 M6 6.4 V12.2" fill="none" stroke="#e0e0e0" stroke-width="1"/></svg>
<div style="position:absolute;left:896px;top:49px;width:184px;height:19px;background:#424242;"></div>
<div style="position:absolute;left:1010px;top:49px;width:40px;height:19px;background:#535353;"></div>
<div style="position:absolute;left:896px;top:68px;width:179px;height:317px;background:#535353;"></div>
<div style="position:absolute;left:1075px;top:49px;width:2.2px;height:671px;background:#3f3f3f;"></div>
<div style="position:absolute;left:1077.2px;top:42px;width:2.8px;height:678px;background:#4f4f4f;"></div>
<span id="t136" style="position:absolute;left:901.8px;top:54.70px;font:normal bold 6.6px/1.15 'Liberation Sans',sans-serif;color:#b9b9b9;white-space:pre;letter-spacing:-0.373px;">Swatc</span>
<span id="t137" style="position:absolute;left:924px;top:54.70px;font:normal bold 6.6px/1.15 'Liberation Sans',sans-serif;color:#b9b9b9;white-space:pre;letter-spacing:-0.147px;">Gradi</span>
<span id="t138" style="position:absolute;left:946.6px;top:54.70px;font:normal bold 6.6px/1.15 'Liberation Sans',sans-serif;color:#b9b9b9;white-space:pre;letter-spacing:-0.217px;">Patter</span>
<span id="t139" style="position:absolute;left:969px;top:54.70px;font:normal bold 6.6px/1.15 'Liberation Sans',sans-serif;color:#b9b9b9;white-space:pre;letter-spacing:-0.260px;">Histor</span>
<span id="t140" style="position:absolute;left:992px;top:54.70px;font:normal bold 6.6px/1.15 'Liberation Sans',sans-serif;color:#b9b9b9;white-space:pre;letter-spacing:-0.169px;">Action</span>
<div style="position:absolute;left:1009px;top:49px;width:1px;height:19px;background:#424242;"></div>
<span id="t141" style="position:absolute;left:1014.5px;top:54.59px;font:normal bold 6.8px/1.15 'Liberation Sans',sans-serif;color:#f4f4f4;white-space:pre;letter-spacing:-0.312px;">Properties</span>
<div style="position:absolute;left:1065px;top:56.4px;width:6.5px;height:1.1px;background:#b0b0b0;"></div>
<div style="position:absolute;left:1065px;top:58.4px;width:6.5px;height:1.1px;background:#b0b0b0;"></div>
<div style="position:absolute;left:1065px;top:60.4px;width:6.5px;height:1.1px;background:#b0b0b0;"></div>
<div style="position:absolute;left:903px;top:73.6px;width:13.5px;height:14.6px;background:#3b3b3b;border-radius:1px;"></div>
<svg style="position:absolute;left:905.8px;top:76px;" width="8" height="10" viewBox="0 0 8 10"><path d="M0.6 0.6 H5 L7.4 3 V9.4 H0.6 Z M5 0.6 V3 H7.4" fill="none" stroke="#e8e8e8" stroke-width="1"/></svg>
<span id="t142" style="position:absolute;left:920px;top:78.61px;font:normal normal 6.6px/1.15 'Liberation Sans',sans-serif;color:#d6d6d6;white-space:pre;letter-spacing:-0.133px;">Document</span>
<div style="position:absolute;left:896px;top:92.3px;width:170px;height:1px;background:#474747;"></div>
<svg style="position:absolute;left:901px;top:100.39999999999999px;" width="6" height="4" viewBox="0 0 6 4"><path d="M0.5 0.5 L3 3 L5.5 0.5" stroke="#bdbdbd" stroke-width="0.9" fill="none"/></svg>
<span id="t143" style="position:absolute;left:910px;top:98.69px;font:normal bold 6.8px/1.15 'Liberation Sans',sans-serif;color:#f2f2f2;white-space:pre;letter-spacing:-0.298px;">Canvas</span>
<span id="t144" style="position:absolute;left:931px;top:116.20px;font:normal normal 6.6px/1.15 'Liberation Sans',sans-serif;color:#cfcfcf;white-space:pre;">W</span>
<div style="position:absolute;left:939px;top:115px;width:31px;height:10px;background:#434343;border-radius:1px;"></div>
<span id="t145" style="position:absolute;left:941.5px;top:116.46px;font:normal normal 6.5px/1.15 'Liberation Sans',sans-serif;color:#e2e2e2;white-space:pre;letter-spacing:-0.334px;">2232 px</span>
<span id="t146" style="position:absolute;left:982px;top:116.20px;font:normal normal 6.6px/1.15 'Liberation Sans',sans-serif;color:#cfcfcf;white-space:pre;">X</span>
<div style="position:absolute;left:989.5px;top:115px;width:31px;height:10px;background:#4b4b4b;border-radius:1px;"></div>
<span id="t147" style="position:absolute;left:992.0px;top:116.46px;font:normal normal 6.5px/1.15 'Liberation Sans',sans-serif;color:#6a6a6a;white-space:pre;">0 px</span>
<span id="t148" style="position:absolute;left:931.5px;top:133.71px;font:normal normal 6.6px/1.15 'Liberation Sans',sans-serif;color:#cfcfcf;white-space:pre;">H</span>
<div style="position:absolute;left:939px;top:132.5px;width:31px;height:10px;background:#434343;border-radius:1px;"></div>
<span id="t149" style="position:absolute;left:941.5px;top:133.96px;font:normal normal 6.5px/1.15 'Liberation Sans',sans-serif;color:#e2e2e2;white-space:pre;letter-spacing:-0.334px;">2854 px</span>
<span id="t150" style="position:absolute;left:982px;top:133.71px;font:normal normal 6.6px/1.15 'Liberation Sans',sans-serif;color:#cfcfcf;white-space:pre;">Y</span>
<div style="position:absolute;left:989.5px;top:132.5px;width:31px;height:10px;background:#4b4b4b;border-radius:1px;"></div>
<span id="t151" style="position:absolute;left:992.0px;top:133.96px;font:normal normal 6.5px/1.15 'Liberation Sans',sans-serif;color:#6a6a6a;white-space:pre;">0 px</span>
<svg style="position:absolute;left:908px;top:124px;" width="5" height="10" viewBox="0 0 5 10"><rect x="0.8" y="0.6" width="3.4" height="3.8" rx="1.6" fill="none" stroke="#d0d0d0" stroke-width="1"/><rect x="0.8" y="5.4" width="3.4" height="3.8" rx="1.6" fill="none" stroke="#d0d0d0" stroke-width="1"/></svg>
<div style="position:absolute;left:939.5px;top:151.5px;width:13.5px;height:16px;background:#383838;border-radius:1px;"></div>
<svg style="position:absolute;left:942.2px;top:154px;" width="8" height="11" viewBox="0 0 8 11"><rect x="0.5" y="0.5" width="7" height="10" fill="none" stroke="#e6e6e6" stroke-width="1"/><circle cx="4" cy="3.6" r="1.3" fill="#e6e6e6"/><path d="M1.8 10 V7.2 A2.2 2.2 0 0 1 6.2 7.2 V10 Z" fill="#e6e6e6"/></svg>
<svg style="position:absolute;left:957.5px;top:154.5px;" width="11" height="9" viewBox="0 0 11 9"><rect x="0.5" y="0.5" width="10" height="8" fill="none" stroke="#e6e6e6" stroke-width="1"/><circle cx="5.5" cy="3.3" r="1.2" fill="#e6e6e6"/><path d="M3.2 8 V6.6 A2.3 2 0 0 1 7.8 6.6 V8 Z" fill="#e6e6e6"/></svg>
<span id="t152" style="position:absolute;left:939px;top:176.26px;font:normal normal 6.5px/1.15 'Liberation Sans',sans-serif;color:#d6d6d6;white-space:pre;letter-spacing:-0.160px;">Resolution: 250 pixels/inch</span>
<span id="t153" style="position:absolute;left:919px;top:194.26px;font:normal normal 6.5px/1.15 'Liberation Sans',sans-serif;color:#d6d6d6;white-space:pre;letter-spacing:-0.441px;">Mode</span>
<div style="position:absolute;left:939.5px;top:192.3px;width:81.5px;height:12.8px;background:#434343;border-radius:1px;"></div>
<span id="t154" style="position:absolute;left:944.0px;top:195.16px;font:normal normal 6.5px/1.15 'Liberation Sans',sans-serif;color:#e6e6e6;white-space:pre;letter-spacing:-0.493px;">RGB Color</span>
<svg style="position:absolute;left:1014.0px;top:197.20000000000002px;" width="5" height="4" viewBox="0 0 5 4"><path d="M0.5 0.5 L2.5 2.6 L4.5 0.5" stroke="#c0c0c0" stroke-width="0.9" fill="none"/></svg>
<div style="position:absolute;left:939.5px;top:209.8px;width:81.5px;height:12.8px;background:#434343;border-radius:1px;"></div>
<span id="t155" style="position:absolute;left:944.0px;top:212.66px;font:normal normal 6.5px/1.15 'Liberation Sans',sans-serif;color:#e6e6e6;white-space:pre;letter-spacing:-0.166px;">16 Bits/Channel</span>
<svg style="position:absolute;left:1014.0px;top:214.70000000000002px;" width="5" height="4" viewBox="0 0 5 4"><path d="M0.5 0.5 L2.5 2.6 L4.5 0.5" stroke="#c0c0c0" stroke-width="0.9" fill="none"/></svg>
<span id="t156" style="position:absolute;left:926px;top:230.86px;font:normal normal 6.5px/1.15 'Liberation Sans',sans-serif;color:#d6d6d6;white-space:pre;letter-spacing:-0.203px;">Fill</span>
<div style="position:absolute;left:939px;top:228.5px;width:11px;height:12px;background:#535353;box-shadow:0 0 0 1px #3a3a3a inset;"></div>
<div style="position:absolute;left:953.8px;top:228.5px;width:67.2px;height:12.3px;background:#434343;border-radius:1px;"></div>
<span id="t157" style="position:absolute;left:958.3px;top:231.11px;font:normal normal 6.5px/1.15 'Liberation Sans',sans-serif;color:#e6e6e6;white-space:pre;letter-spacing:-0.056px;">Transparent</span>
<svg style="position:absolute;left:1014.0px;top:233.15px;" width="5" height="4" viewBox="0 0 5 4"><path d="M0.5 0.5 L2.5 2.6 L4.5 0.5" stroke="#c0c0c0" stroke-width="0.9" fill="none"/></svg>
<div style="position:absolute;left:896px;top:247.3px;width:170px;height:1px;background:#474747;"></div>
<svg style="position:absolute;left:901px;top:254.8px;" width="6" height="4" viewBox="0 0 6 4"><path d="M0.5 0.5 L3 3 L5.5 0.5" stroke="#bdbdbd" stroke-width="0.9" fill="none"/></svg>
<span id="t158" style="position:absolute;left:910px;top:253.09px;font:normal bold 6.8px/1.15 'Liberation Sans',sans-serif;color:#f2f2f2;white-space:pre;letter-spacing:-0.207px;">Rulers &amp; Grids</span>
<div style="position:absolute;left:903px;top:270.6px;width:14.5px;height:15.5px;background:#383838;border-radius:1px;"></div>
<svg style="position:absolute;left:905.5px;top:273.5px;" width="10" height="10" viewBox="0 0 10 10"><path d="M0 0 H10 V3.4 H3.4 V10 H0 Z" fill="#e8e8e8"/><path d="M4.5 0 V1.8 M6.5 0 V1.8 M8.5 0 V1.8 M0 4.5 H1.8 M0 6.5 H1.8 M0 8.5 H1.8" stroke="#383838" stroke-width="0.7"/></svg>
<svg style="position:absolute;left:925.6px;top:273px;" width="11" height="11" viewBox="0 0 11 11"><rect x="0.5" y="0.5" width="10" height="10" fill="none" stroke="#dcdcdc" stroke-width="0.9"/><path d="M3.8 0.5 V10.5 M7.2 0.5 V10.5 M0.5 3.8 H10.5 M0.5 7.2 H10.5" stroke="#dcdcdc" stroke-width="0.9"/></svg>
<svg style="position:absolute;left:946.6px;top:273px;" width="10.5" height="11" viewBox="0 0 10.5 11"><rect x="0.5" y="0.5" width="9.5" height="10" rx="1" fill="none" stroke="#dcdcdc" stroke-width="0.9"/><rect x="2.5" y="2.5" width="5.5" height="6" fill="none" stroke="#bdbdbd" stroke-width="0.8" stroke-dasharray="1 1"/></svg>
<div style="position:absolute;left:975px;top:272.5px;width:46px;height:12.6px;background:#434343;border-radius:1px;"></div>
<span id="t159" style="position:absolute;left:979.5px;top:275.26px;font:normal normal 6.5px/1.15 'Liberation Sans',sans-serif;color:#e6e6e6;white-space:pre;letter-spacing:-0.341px;">Pixels</span>
<svg style="position:absolute;left:1014px;top:277.3px;" width="5" height="4" viewBox="0 0 5 4"><path d="M0.5 0.5 L2.5 2.6 L4.5 0.5" stroke="#c0c0c0" stroke-width="0.9" fill="none"/></svg>
<div style="position:absolute;left:896px;top:293.4px;width:170px;height:1px;background:#474747;"></div>
<svg style="position:absolute;left:901px;top:302.6px;" width="6" height="4" viewBox="0 0 6 4"><path d="M0.5 0.5 L3 3 L5.5 0.5" stroke="#bdbdbd" stroke-width="0.9" fill="none"/></svg>
<span id="t160" style="position:absolute;left:910px;top:300.89px;font:normal bold 6.8px/1.15 'Liberation Sans',sans-serif;color:#f2f2f2;white-space:pre;letter-spacing:-0.291px;">Guides</span>
<div style="position:absolute;left:903px;top:317.6px;width:14.5px;height:15.5px;background:#383838;border-radius:1px;"></div>
<svg style="position:absolute;left:905.5px;top:320.5px;" width="10" height="10" viewBox="0 0 10 10"><path d="M3 0 V10 M6.5 0 V10 M0 3 H10 M0 6.5 H10" stroke="#e6e6e6" stroke-width="0.9"/></svg>
<svg style="position:absolute;left:927px;top:320px;" width="10.5" height="11" viewBox="0 0 10.5 11"><path d="M3 0 V10 M6 0 V5 M0 3 H9 M0 6.5 H5" stroke="#dcdcdc" stroke-width="0.9"/><rect x="5.6" y="6.8" width="4.6" height="3.8" fill="#dcdcdc"/><path d="M6.6 6.8 V5.6 A1.3 1.3 0 0 1 9.2 5.6 V6.8" fill="none" stroke="#dcdcdc" stroke-width="0.8"/></svg>
<div style="position:absolute;left:944.5px;top:317.6px;width:14.5px;height:15.5px;background:#383838;border-radius:1px;"></div>
<svg style="position:absolute;left:947px;top:320px;" width="10" height="11" viewBox="0 0 10 11"><path d="M2.5 0 V11 M0 3.5 H10 M6 2 L4 3.5 L6 5" stroke="#e6e6e6" stroke-width="0.9" fill="none"/><rect x="6.3" y="6" width="2.6" height="4" fill="#e6e6e6"/></svg>
<div style="position:absolute;left:975px;top:320px;width:46px;height:13px;background:#434343;border-radius:1px;"></div>
<svg style="position:absolute;left:1014px;top:325.0px;" width="5" height="4" viewBox="0 0 5 4"><path d="M0.5 0.5 L2.5 2.6 L4.5 0.5" stroke="#c0c0c0" stroke-width="0.9" fill="none"/></svg>
<div style="position:absolute;left:979px;top:326px;width:27px;height:1.4px;background:#dcdcdc;"></div>
<div style="position:absolute;left:896px;top:341px;width:170px;height:1px;background:#474747;"></div>
<svg style="position:absolute;left:901px;top:350.6px;" width="6" height="4" viewBox="0 0 6 4"><path d="M0.5 0.5 L3 3 L5.5 0.5" stroke="#bdbdbd" stroke-width="0.9" fill="none"/></svg>
<span id="t161" style="position:absolute;left:910px;top:348.89px;font:normal bold 6.8px/1.15 'Liberation Sans',sans-serif;color:#f2f2f2;white-space:pre;letter-spacing:-0.189px;">Quick Actions</span>
<div style="position:absolute;left:1066px;top:94px;width:9.5px;height:275px;background:#4d4d4d;"></div>
<div style="position:absolute;left:1066.5px;top:98px;width:8px;height:228px;background:#6a6a6a;border-radius:1px;"></div>
<svg style="position:absolute;left:1068px;top:97.5px;" width="5" height="3.5" viewBox="0 0 5 3.5"><path d="M0.5 3 L2.5 0.8 L4.5 3" stroke="#8a8a8a" stroke-width="0.8" fill="none"/></svg>
<svg style="position:absolute;left:1068px;top:359.5px;" width="5" height="3.5" viewBox="0 0 5 3.5"><path d="M0.5 0.5 L2.5 2.7 L4.5 0.5" stroke="#8a8a8a" stroke-width="0.8" fill="none"/></svg>
<div style="position:absolute;left:896px;top:385px;width:179px;height:2.8px;background:#3c3c3c;"></div>
<div style="position:absolute;left:896px;top:387.8px;width:179px;height:19px;background:#424242;"></div>
<div style="position:absolute;left:896px;top:387.8px;width:29.6px;height:19px;background:#535353;"></div>
<div style="position:absolute;left:896px;top:406.7px;width:179px;height:313.3px;background:#535353;"></div>
<span id="t162" style="position:absolute;left:901.8px;top:392.79px;font:normal bold 6.8px/1.15 'Liberation Sans',sans-serif;color:#f4f4f4;white-space:pre;letter-spacing:-0.570px;">Layers</span>
<div style="position:absolute;left:1065.5px;top:394.4px;width:6.5px;height:1.1px;background:#a8a8a8;"></div>
<div style="position:absolute;left:1065.5px;top:396.4px;width:6.5px;height:1.1px;background:#a8a8a8;"></div>
<div style="position:absolute;left:1065.5px;top:398.4px;width:6.5px;height:1.1px;background:#a8a8a8;"></div>
<div style="position:absolute;left:899.7px;top:413px;width:52px;height:12.4px;background:#434343;border-radius:1px;"></div>
<svg style="position:absolute;left:903.5px;top:415.5px;" width="7" height="7.5" viewBox="0 0 7 7.5"><circle cx="2.8" cy="2.8" r="2.1" fill="none" stroke="#e0e0e0" stroke-width="1"/><path d="M4.4 4.4 L6.5 6.8" stroke="#e0e0e0" stroke-width="1.2"/></svg>
<span id="t163" style="position:absolute;left:912.6px;top:415.76px;font:normal bold 6.5px/1.15 'Liberation Sans',sans-serif;color:#e6e6e6;white-space:pre;letter-spacing:-0.488px;">Kind</span>
<svg style="position:absolute;left:945.5px;top:418px;" width="5" height="4" viewBox="0 0 5 4"><path d="M0.5 0.5 L2.5 2.6 L4.5 0.5" stroke="#c0c0c0" stroke-width="0.9" fill="none"/></svg>
<svg style="position:absolute;left:959px;top:416px;" width="9" height="8" viewBox="0 0 9 8"><rect x="0.5" y="0.5" width="8" height="7" fill="none" stroke="#e0e0e0" stroke-width="1"/><path d="M1 6.5 L3.2 4 L4.8 5.6 L6 4.6 L8 6.8 Z" fill="#e0e0e0"/><circle cx="6" cy="2.5" r="0.8" fill="#e0e0e0"/></svg>
<svg style="position:absolute;left:974.5px;top:416px;" width="8" height="8" viewBox="0 0 8 8"><circle cx="4" cy="4" r="3.4" fill="none" stroke="#e0e0e0" stroke-width="1"/><path d="M4 0.6 A3.4 3.4 0 0 0 4 7.4 Z" fill="#e0e0e0" transform="rotate(45 4 4)"/></svg>
<span id="t164" style="position:absolute;left:989.8px;top:414.54px;font:normal bold 9.5px/1.15 'Liberation Serif',serif;color:#e6e6e6;white-space:pre;">T</span>
<svg style="position:absolute;left:1004.5px;top:416px;" width="8.5" height="8.5" viewBox="0 0 8.5 8.5"><rect x="1.5" y="1.5" width="5.5" height="5.5" fill="none" stroke="#e0e0e0" stroke-width="0.9"/><rect x="0.3" y="0.3" width="2.2" height="2.2" fill="#e0e0e0"/><rect x="6" y="0.3" width="2.2" height="2.2" fill="#e0e0e0"/><rect x="0.3" y="6" width="2.2" height="2.2" fill="#e0e0e0"/><rect x="6" y="6" width="2.2" height="2.2" fill="#e0e0e0"/></svg>
<svg style="position:absolute;left:1020.5px;top:415.5px;" width="7.5" height="9" viewBox="0 0 7.5 9"><path d="M0.5 0.5 H4.5 L7 3 V8.5 H0.5 Z" fill="none" stroke="#e0e0e0" stroke-width="0.9"/><rect x="0.5" y="4.5" width="4" height="4" fill="#e0e0e0"/></svg>
<div style="position:absolute;left:1035.5px;top:413.2px;width:5.2px;height:5.2px;background:#ececec;border-radius:50%;"></div>
<div style="position:absolute;left:1036.6px;top:418.5px;width:3px;height:6px;background:#404040;border-radius:0 0 2px 2px;"></div>
<div style="position:absolute;left:896px;top:429px;width:180px;height:1px;background:#474747;"></div>
<div style="position:absolute;left:899.7px;top:434px;width:77.3px;height:11.2px;background:#4d4d4d;border-radius:1px;box-shadow:0 0 0 0.6px #5e5e5e inset;"></div>
<span id="t165" style="position:absolute;left:903.5px;top:436.18px;font:normal normal 6.3px/1.15 'Liberation Sans',sans-serif;color:#757575;white-space:pre;letter-spacing:-0.216px;">Normal</span>
<svg style="position:absolute;left:969.5px;top:438.3px;" width="5" height="4" viewBox="0 0 5 4"><path d="M0.5 0.5 L2.5 2.6 L4.5 0.5" stroke="#6c6c6c" stroke-width="0.9" fill="none"/></svg>
<span id="t166" style="position:absolute;left:982.8px;top:436.18px;font:normal normal 6.3px/1.15 'Liberation Sans',sans-serif;color:#7a7a7a;white-space:pre;letter-spacing:-0.014px;">Opacity:</span>
<div style="position:absolute;left:1009.7px;top:434.5px;width:19.5px;height:10.5px;background:#494949;"></div>
<span id="t167" style="position:absolute;left:1012.5px;top:436.29px;font:normal normal 6.1px/1.15 'Liberation Sans',sans-serif;color:#707070;white-space:pre;">100%</span>
<div style="position:absolute;left:1032.7px;top:434.5px;width:6.5px;height:10.5px;background:#4e4e4e;box-shadow:0 0 0 0.6px #5e5e5e inset;"></div>
<div style="position:absolute;left:896px;top:449.3px;width:180px;height:1px;background:#4a4a4a;"></div>
<span id="t168" style="position:absolute;left:899.7px;top:455.58px;font:normal normal 6.3px/1.15 'Liberation Sans',sans-serif;color:#7f7f7f;white-space:pre;letter-spacing:-0.113px;">Lock:</span>
<svg style="position:absolute;left:919.8px;top:455px;" width="8" height="8" viewBox="0 0 8 8"><rect x="0.4" y="0.4" width="7.2" height="7.2" fill="none" stroke="#b4b4b4" stroke-width="0.8"/><rect x="0.4" y="0.4" width="2.4" height="2.4" fill="#b4b4b4"/><rect x="5.2" y="0.4" width="2.4" height="2.4" fill="#b4b4b4"/><rect x="2.8" y="2.8" width="2.4" height="2.4" fill="#b4b4b4"/><rect x="0.4" y="5.2" width="2.4" height="2.4" fill="#b4b4b4"/><rect x="5.2" y="5.2" width="2.4" height="2.4" fill="#b4b4b4"/></svg>
<svg style="position:absolute;left:932.5px;top:454px;" width="9" height="10" viewBox="0 0 9 10"><path d="M8 0.6 L8.6 1.3 L4.3 6.3 L3.3 5.4 Z" fill="#b4b4b4"/><path d="M2.8 6 L3.8 6.9 C3.5 8.6 2 9.2 0.6 9 C1.6 8.3 1.5 6.5 2.8 6 Z" fill="#b4b4b4"/></svg>
<svg style="position:absolute;left:947px;top:454.5px;" width="9" height="9" viewBox="0 0 9 9"><path d="M4.5 0 L6 1.9 H5 V4 H7.1 V3 L9 4.5 L7.1 6 V5 H5 V7.1 H6 L4.5 9 L3 7.1 H4 V5 H1.9 V6 L0 4.5 L1.9 3 V4 H4 V1.9 H3 Z" fill="#b4b4b4"/></svg>
<svg style="position:absolute;left:961px;top:455px;" width="8.5" height="8" viewBox="0 0 8.5 8"><path d="M0.5 2 H5.5 L8 4.5 V7.5 H0.5 Z" fill="none" stroke="#b4b4b4" stroke-width="0.9"/><path d="M0.5 0.3 V2 M5.5 2 V4.5 H8" stroke="#b4b4b4" stroke-width="0.8" fill="none"/></svg>
<svg style="position:absolute;left:975.5px;top:454.5px;" width="7" height="9" viewBox="0 0 7 9"><rect x="0.3" y="3.8" width="6.4" height="5" rx="0.6" fill="#b4b4b4"/><path d="M1.6 3.8 V2.4 A1.9 1.9 0 0 1 5.4 2.4 V3.8" fill="none" stroke="#b4b4b4" stroke-width="1"/></svg>
<span id="t169" style="position:absolute;left:997px;top:455.58px;font:normal normal 6.3px/1.15 'Liberation Sans',sans-serif;color:#7f7f7f;white-space:pre;letter-spacing:-0.219px;">Fill:</span>
<div style="position:absolute;left:1009.7px;top:454px;width:19.5px;height:10.5px;background:#494949;"></div>
<span id="t170" style="position:absolute;left:1012.5px;top:455.69px;font:normal normal 6.1px/1.15 'Liberation Sans',sans-serif;color:#707070;white-space:pre;">100%</span>
<div style="position:absolute;left:1032.7px;top:454px;width:6.5px;height:10.5px;background:#4e4e4e;box-shadow:0 0 0 0.6px #5e5e5e inset;"></div>
<div style="position:absolute;left:896px;top:468.6px;width:180px;height:1px;background:#474747;"></div>
<div style="position:absolute;left:915px;top:469.6px;width:1px;height:236px;background:#484848;"></div>
<div style="position:absolute;left:896px;top:486.6px;width:170px;height:1px;background:#4c4c4c;"></div>
<div style="position:absolute;left:896px;top:515.6px;width:170px;height:1px;background:#4c4c4c;"></div>
<div style="position:absolute;left:896px;top:544.6px;width:170px;height:1px;background:#4c4c4c;"></div>
<div style="position:absolute;left:896px;top:573px;width:170px;height:1px;background:#4c4c4c;"></div>
<div style="position:absolute;left:896px;top:601.6px;width:170px;height:1px;background:#4c4c4c;"></div>
<div style="position:absolute;left:896px;top:630px;width:170px;height:1px;background:#4c4c4c;"></div>
<div style="position:absolute;left:896px;top:658.6px;width:170px;height:1px;background:#4c4c4c;"></div>
<div style="position:absolute;left:896px;top:687.2px;width:170px;height:1px;background:#4c4c4c;"></div>
<svg style="position:absolute;left:901.5px;top:475px;" width="9" height="6" viewBox="0 0 9 6"><path d="M0.4 3 C2 0.4 7 0.4 8.6 3 C7 5.6 2 5.6 0.4 3 Z" fill="#a0a0a0"/><circle cx="4.5" cy="3" r="1.3" fill="#535353"/></svg>
<svg style="position:absolute;left:927px;top:476px;" width="5" height="4" viewBox="0 0 5 4"><path d="M0.5 0.5 L2.5 2.8 L4.5 0.5" stroke="#c8c8c8" stroke-width="0.9" fill="none"/></svg>
<svg style="position:absolute;left:935px;top:474px;" width="9.5" height="8" viewBox="0 0 9.5 8"><path d="M0.3 0.6 H3.4 L4.4 1.8 H9.2 V7.6 H0.3 Z" fill="#e2e2e2"/><rect x="0.3" y="2.8" width="8.9" height="0.8" fill="#535353"/></svg>
<span id="t171" style="position:absolute;left:951.4px;top:474.58px;font:normal normal 6.3px/1.15 'Liberation Sans',sans-serif;color:#f0f0f0;white-space:pre;letter-spacing:-0.056px;">edite text</span>
<svg style="position:absolute;left:901.5px;top:498.4px;" width="9" height="6" viewBox="0 0 9 6"><path d="M0.4 3 C2 0.4 7 0.4 8.6 3 C7 5.6 2 5.6 0.4 3 Z" fill="#a0a0a0"/><circle cx="4.5" cy="3" r="1.3" fill="#535353"/></svg>
<span id="t172" style="position:absolute;left:943.0px;top:493.46px;font:normal normal 14.5px/1.15 'Liberation Serif',serif;color:#e2e2e2;white-space:pre;">T</span>
<span id="t173" style="position:absolute;left:963px;top:498.08px;font:normal normal 6.3px/1.15 'Liberation Sans',sans-serif;color:#f0f0f0;white-space:pre;letter-spacing:-0.145px;">Layer 2</span>
<svg style="position:absolute;left:901.5px;top:527px;" width="9" height="6" viewBox="0 0 9 6"><path d="M0.4 3 C2 0.4 7 0.4 8.6 3 C7 5.6 2 5.6 0.4 3 Z" fill="#a0a0a0"/><circle cx="4.5" cy="3" r="1.3" fill="#535353"/></svg>
<svg style="position:absolute;left:937.9px;top:519.4px;" width="15.5" height="20.5" viewBox="0 0 15.5 20.5"><rect width="15.5" height="20.5" fill="#fff"/><rect x="3.1" y="0.00" width="3.1" height="3.42" fill="#cfcfcf"/><rect x="9.3" y="0.00" width="3.1" height="3.42" fill="#cfcfcf"/><rect x="0.0" y="3.42" width="3.1" height="3.42" fill="#cfcfcf"/><rect x="6.2" y="3.42" width="3.1" height="3.42" fill="#cfcfcf"/><rect x="12.4" y="3.42" width="3.1" height="3.42" fill="#cfcfcf"/><rect x="3.1" y="6.84" width="3.1" height="3.42" fill="#cfcfcf"/><rect x="9.3" y="6.84" width="3.1" height="3.42" fill="#cfcfcf"/><rect x="0.0" y="10.26" width="3.1" height="3.42" fill="#cfcfcf"/><rect x="6.2" y="10.26" width="3.1" height="3.42" fill="#cfcfcf"/><rect x="12.4" y="10.26" width="3.1" height="3.42" fill="#cfcfcf"/><rect x="3.1" y="13.68" width="3.1" height="3.42" fill="#cfcfcf"/><rect x="9.3" y="13.68" width="3.1" height="3.42" fill="#cfcfcf"/><rect x="0.0" y="17.10" width="3.1" height="3.42" fill="#cfcfcf"/><rect x="6.2" y="17.10" width="3.1" height="3.42" fill="#cfcfcf"/><rect x="12.4" y="17.10" width="3.1" height="3.42" fill="#cfcfcf"/><path d="M2 2.2 L3.6 1.6 L3.2 4.4" stroke="#b03030" stroke-width="0.9" fill="none"/></svg>
<span id="t174" style="position:absolute;left:959.3px;top:526.58px;font:normal normal 6.3px/1.15 'Liberation Sans',sans-serif;color:#f0f0f0;white-space:pre;letter-spacing:-0.145px;">Layer 3</span>
<svg style="position:absolute;left:901.5px;top:555.6px;" width="9" height="6" viewBox="0 0 9 6"><path d="M0.4 3 C2 0.4 7 0.4 8.6 3 C7 5.6 2 5.6 0.4 3 Z" fill="#a0a0a0"/><circle cx="4.5" cy="3" r="1.3" fill="#535353"/></svg>
<span id="t175" style="position:absolute;left:943.0px;top:550.66px;font:normal normal 14.5px/1.15 'Liberation Serif',serif;color:#e2e2e2;white-space:pre;">T</span>
<span id="t176" style="position:absolute;left:963px;top:555.28px;font:normal normal 6.3px/1.15 'Liberation Sans',sans-serif;color:#f0f0f0;white-space:pre;letter-spacing:0.142px;">cilla0000000...&lt;&lt;&lt;&lt;&lt;&lt;&lt;&lt;0 d</span>
<svg style="position:absolute;left:901.5px;top:584.2px;" width="9" height="6" viewBox="0 0 9 6"><path d="M0.4 3 C2 0.4 7 0.4 8.6 3 C7 5.6 2 5.6 0.4 3 Z" fill="#5a5a5a"/><circle cx="4.5" cy="3" r="1.3" fill="#535353"/></svg>
<span id="t177" style="position:absolute;left:943.0px;top:579.26px;font:normal normal 14.5px/1.15 'Liberation Serif',serif;color:#e2e2e2;white-space:pre;">T</span>
<span id="t178" style="position:absolute;left:963px;top:583.88px;font:normal normal 6.3px/1.15 'Liberation Sans',sans-serif;color:#f0f0f0;white-space:pre;letter-spacing:-0.505px;">1aa</span>
<svg style="position:absolute;left:901.5px;top:612.4px;" width="9" height="6" viewBox="0 0 9 6"><path d="M0.4 3 C2 0.4 7 0.4 8.6 3 C7 5.6 2 5.6 0.4 3 Z" fill="#a0a0a0"/><circle cx="4.5" cy="3" r="1.3" fill="#535353"/></svg>
<span id="t179" style="position:absolute;left:943.0px;top:607.46px;font:normal normal 14.5px/1.15 'Liberation Serif',serif;color:#e2e2e2;white-space:pre;">T</span>
<span id="t180" style="position:absolute;left:963px;top:612.08px;font:normal normal 6.3px/1.15 'Liberation Sans',sans-serif;color:#f0f0f0;white-space:pre;letter-spacing:-0.505px;">169</span>
<svg style="position:absolute;left:901.5px;top:641.3px;" width="9" height="6" viewBox="0 0 9 6"><path d="M0.4 3 C2 0.4 7 0.4 8.6 3 C7 5.6 2 5.6 0.4 3 Z" fill="#a0a0a0"/><circle cx="4.5" cy="3" r="1.3" fill="#535353"/></svg>
<span id="t181" style="position:absolute;left:943.0px;top:636.36px;font:normal normal 14.5px/1.15 'Liberation Serif',serif;color:#e2e2e2;white-space:pre;">T</span>
<span id="t182" style="position:absolute;left:963px;top:640.98px;font:normal normal 6.3px/1.15 'Liberation Sans',sans-serif;color:#f0f0f0;white-space:pre;letter-spacing:-0.250px;">m</span>
<svg style="position:absolute;left:901.5px;top:669.5px;" width="9" height="6" viewBox="0 0 9 6"><path d="M0.4 3 C2 0.4 7 0.4 8.6 3 C7 5.6 2 5.6 0.4 3 Z" fill="#a0a0a0"/><circle cx="4.5" cy="3" r="1.3" fill="#535353"/></svg>
<span id="t183" style="position:absolute;left:943.0px;top:664.56px;font:normal normal 14.5px/1.15 'Liberation Serif',serif;color:#e2e2e2;white-space:pre;">T</span>
<span id="t184" style="position:absolute;left:963px;top:669.18px;font:normal normal 6.3px/1.15 'Liberation Sans',sans-serif;color:#f0f0f0;white-space:pre;letter-spacing:-0.276px;">125 cm</span>
<svg style="position:absolute;left:901.5px;top:697.6px;" width="9" height="6" viewBox="0 0 9 6"><path d="M0.4 3 C2 0.4 7 0.4 8.6 3 C7 5.6 2 5.6 0.4 3 Z" fill="#a0a0a0"/><circle cx="4.5" cy="3" r="1.3" fill="#535353"/></svg>
<span id="t185" style="position:absolute;left:943.0px;top:692.66px;font:normal normal 14.5px/1.15 'Liberation Serif',serif;color:#e2e2e2;white-space:pre;">T</span>
<span id="t186" style="position:absolute;left:963px;top:697.28px;font:normal normal 6.3px/1.15 'Liberation Sans',sans-serif;color:#f0f0f0;white-space:pre;letter-spacing:-0.252px;">01.01.1990</span>
<div style="position:absolute;left:1066px;top:470px;width:9.5px;height:235px;background:#4d4d4d;"></div>
<div style="position:absolute;left:1066.5px;top:490px;width:8px;height:66.5px;background:#6a6a6a;border-radius:1px;"></div>
<svg style="position:absolute;left:1068px;top:475.5px;" width="5" height="3.5" viewBox="0 0 5 3.5"><path d="M0.5 3 L2.5 0.8 L4.5 3" stroke="#8a8a8a" stroke-width="0.8" fill="none"/></svg>
<div style="position:absolute;left:896px;top:705px;width:180px;height:15px;background:#535353;"></div>
<div style="position:absolute;left:896px;top:705px;width:180px;height:1px;background:#464646;"></div>
<svg style="position:absolute;left:948px;top:711px;" width="10" height="6" viewBox="0 0 10 6"><rect x="0.5" y="1" width="5" height="4" rx="2" fill="none" stroke="#7c7c7c" stroke-width="0.9"/><rect x="4.5" y="1" width="5" height="4" rx="2" fill="none" stroke="#7c7c7c" stroke-width="0.9"/></svg>
<span id="t187" style="position:absolute;left:966.5px;top:709.89px;font:italic normal 7.5px/1.15 'Liberation Sans',sans-serif;color:#8a8a8a;white-space:pre;">fx</span>
<svg style="position:absolute;left:982px;top:710px;" width="9" height="8" viewBox="0 0 9 8"><rect x="0.5" y="0.5" width="8" height="7" fill="#cfcfcf"/><circle cx="4.5" cy="4" r="2" fill="#535353"/></svg>
<svg style="position:absolute;left:999.5px;top:709.5px;" width="9" height="9" viewBox="0 0 9 9"><circle cx="4.5" cy="4.5" r="3.8" fill="none" stroke="#e0e0e0" stroke-width="1"/><path d="M4.5 0.7 A3.8 3.8 0 0 0 4.5 8.3 Z" fill="#e0e0e0" transform="rotate(45 4.5 4.5)"/></svg>
<svg style="position:absolute;left:1015.5px;top:710px;" width="10" height="8" viewBox="0 0 10 8"><path d="M0.3 0.4 H3.6 L4.6 1.6 H9.6 V7.6 H0.3 Z" fill="#e2e2e2"/></svg>
<svg style="position:absolute;left:1033px;top:709.5px;" width="8.5" height="9.5" viewBox="0 0 8.5 9.5"><rect x="0.5" y="0.5" width="7.5" height="8.5" fill="none" stroke="#e0e0e0" stroke-width="1"/><path d="M4.25 2.8 V6.8 M2.3 4.8 H6.2" stroke="#e0e0e0" stroke-width="0.9"/></svg>
<svg style="position:absolute;left:1050px;top:709.5px;" width="8" height="9.5" viewBox="0 0 8 9.5"><path d="M0.3 1.8 H7.7 M2.8 1.8 V0.5 H5.2 V1.8 M1.2 1.8 L1.7 9 H6.3 L6.8 1.8 M3 3.5 V7.5 M5 3.5 V7.5" fill="none" stroke="#7c7c7c" stroke-width="0.9"/></svg>
<div style="position:absolute;left:303.3px;top:187.2px;width:59px;height:410.4px;background:repeating-conic-gradient(#cdcdcd 0% 25%,#ffffff 0% 50%) 0.5px -1px/10.2px 10.2px;"></div>
<div style="position:absolute;left:303.3px;top:209.6px;width:59px;height:1.2px;background:#8fe6e6;"></div>
<div style="position:absolute;left:303.3px;top:574.2px;width:59px;height:1.2px;background:#8fe6e6;"></div>
<div style="position:absolute;left:323px;top:187.2px;width:1.2px;height:410.4px;background:#8fe6e6;"></div>
<div style="position:absolute;left:362px;top:112.4px;width:356px;height:494.2px;background:#ffffff;"></div>
<svg style="position:absolute;left:0;top:0" width="1080" height="720" viewBox="0 0 1080 720"><path d="M373.7 118.4 H705.4 V147.4 C684 144 645 142.2 611 142.7 C580 143.2 552 145 530 146.6 C505 148.6 490 152.2 470 153.6 C455 154.6 440 154.5 425 153.9 C405 153.1 390 151.8 373.7 151.4 Z" fill="#5aa4e0"/><path transform="translate(444.6 128.5) rotate(14) scale(4.8)" d="M0 -1 C0.55 -1 1 -0.55 1 0 C1 0.9 0.1 1.3 -0.9 2.4 C-0.6 1.4 -1 0.8 -1 0 C-1 -0.55 -0.55 -1 0 -1 Z" fill="#fff"/><path transform="translate(411.6 138.2) rotate(35) scale(2.4)" d="M0 -1 C0.55 -1 1 -0.55 1 0 C1 0.9 0.1 1.3 -0.9 2.4 C-0.6 1.4 -1 0.8 -1 0 C-1 -0.55 -0.55 -1 0 -1 Z" fill="#fff"/><path transform="translate(384 145.2) rotate(50) scale(3.0)" d="M0 -1 C0.55 -1 1 -0.55 1 0 C1 0.9 0.1 1.3 -0.9 2.4 C-0.6 1.4 -1 0.8 -1 0 C-1 -0.55 -0.55 -1 0 -1 Z" fill="#fff"/><path transform="translate(498.3 142.6) rotate(110) scale(4.4)" d="M0 -1 C0.55 -1 1 -0.55 1 0 C1 0.9 0.1 1.3 -0.9 2.4 C-0.6 1.4 -1 0.8 -1 0 C-1 -0.55 -0.55 -1 0 -1 Z" fill="#fff"/><path transform="translate(530 125.2) rotate(45) scale(4.0)" d="M0 -1 C0.55 -1 1 -0.55 1 0 C1 0.9 0.1 1.3 -0.9 2.4 C-0.6 1.4 -1 0.8 -1 0 C-1 -0.55 -0.55 -1 0 -1 Z" fill="#fff"/><ellipse cx="533.3" cy="140.4" rx="12.4" ry="4.3" fill="#0c0c0c"/><path d="M374.5 123 H384.5 V124.8 H381 V126.5 C384 127.5 385.5 130 386 132.6 C388.5 132.6 390 134.2 390 136.6 V139.6 H386.2 V137.4 H382 C380 137.4 378 136.3 377 134.4 H373.8 V129.8 H377 C377.5 128.4 378.3 127.3 379 126.5 V124.8 H374.5 Z" fill="#101010"/><path id="wave" d="M391.5 146.4 C410 146.4 430 145.4 447 144 C462 142.6 472 139.6 482 136.2 C490 133.6 497 132.4 503 134.4 C509 136.4 514 139.4 518 142" fill="none"/><text font-family='"Liberation Sans",sans-serif' font-size="5.2" fill="#14222e" textLength="128" lengthAdjust="spacing"><textPath href="#wave">Great water every day, used water taken away</textPath></text><path d="M600.6 153.7 C602 151.2 610 151.2 611.8 154.2 C612.5 157.2 609 160.79999999999998 606 160.6 C603 160.6 600 157.2 600.6 153.7 Z" fill="#2b2b2b"/><ellipse cx="606.5" cy="155.2" rx="2.6" ry="1.5" fill="#7d7d7d"/><path d="M600.6 198.1 C602 195.6 610 195.6 611.8 198.6 C612.5 201.6 609 205.2 606 205.0 C603 205.0 600 201.6 600.6 198.1 Z" fill="#2b2b2b"/><ellipse cx="606.5" cy="199.6" rx="2.6" ry="1.5" fill="#7d7d7d"/><path d="M600.6 232.8 C602 230.3 610 230.3 611.8 233.3 C612.5 236.3 609 239.9 606 239.70000000000002 C603 239.70000000000002 600 236.3 600.6 232.8 Z" fill="#2b2b2b"/><ellipse cx="606.5" cy="234.3" rx="2.6" ry="1.5" fill="#7d7d7d"/><rect x="479.00" y="206.00" width="1.45" height="1.45" fill="#222"/><rect x="480.35" y="206.00" width="1.45" height="1.45" fill="#222"/><rect x="483.05" y="206.00" width="1.45" height="1.45" fill="#222"/><rect x="484.40" y="206.00" width="1.45" height="1.45" fill="#222"/><rect x="485.75" y="206.00" width="1.45" height="1.45" fill="#222"/><rect x="487.10" y="206.00" width="1.45" height="1.45" fill="#222"/><rect x="488.45" y="206.00" width="1.45" height="1.45" fill="#222"/><rect x="489.80" y="206.00" width="1.45" height="1.45" fill="#222"/><rect x="491.15" y="206.00" width="1.45" height="1.45" fill="#222"/><rect x="492.50" y="206.00" width="1.45" height="1.45" fill="#222"/><rect x="493.85" y="206.00" width="1.45" height="1.45" fill="#222"/><rect x="495.20" y="206.00" width="1.45" height="1.45" fill="#222"/><rect x="497.90" y="206.00" width="1.45" height="1.45" fill="#222"/><rect x="499.25" y="206.00" width="1.45" height="1.45" fill="#222"/><rect x="503.30" y="206.00" width="1.45" height="1.45" fill="#222"/><rect x="504.65" y="206.00" width="1.45" height="1.45" fill="#222"/><rect x="507.35" y="206.00" width="1.45" height="1.45" fill="#222"/><rect x="510.05" y="206.00" width="1.45" height="1.45" fill="#222"/><rect x="511.40" y="206.00" width="1.45" height="1.45" fill="#222"/><rect x="512.75" y="206.00" width="1.45" height="1.45" fill="#222"/><rect x="514.10" y="206.00" width="1.45" height="1.45" fill="#222"/><rect x="516.80" y="206.00" width="1.45" height="1.45" fill="#222"/><rect x="520.85" y="206.00" width="1.45" height="1.45" fill="#222"/><rect x="479.00" y="207.35" width="1.45" height="1.45" fill="#222"/><rect x="480.35" y="207.35" width="1.45" height="1.45" fill="#222"/><rect x="481.70" y="207.35" width="1.45" height="1.45" fill="#222"/><rect x="483.05" y="207.35" width="1.45" height="1.45" fill="#222"/><rect x="485.75" y="207.35" width="1.45" height="1.45" fill="#222"/><rect x="487.10" y="207.35" width="1.45" height="1.45" fill="#222"/><rect x="489.80" y="207.35" width="1.45" height="1.45" fill="#222"/><rect x="491.15" y="207.35" width="1.45" height="1.45" fill="#222"/><rect x="495.20" y="207.35" width="1.45" height="1.45" fill="#222"/><rect x="496.55" y="207.35" width="1.45" height="1.45" fill="#222"/><rect x="497.90" y="207.35" width="1.45" height="1.45" fill="#222"/><rect x="501.95" y="207.35" width="1.45" height="1.45" fill="#222"/><rect x="504.65" y="207.35" width="1.45" height="1.45" fill="#222"/><rect x="506.00" y="207.35" width="1.45" height="1.45" fill="#222"/><rect x="508.70" y="207.35" width="1.45" height="1.45" fill="#222"/><rect x="510.05" y="207.35" width="1.45" height="1.45" fill="#222"/><rect x="511.40" y="207.35" width="1.45" height="1.45" fill="#222"/><rect x="515.45" y="207.35" width="1.45" height="1.45" fill="#222"/><rect x="518.15" y="207.35" width="1.45" height="1.45" fill="#222"/><rect x="479.00" y="208.70" width="1.45" height="1.45" fill="#222"/><rect x="480.35" y="208.70" width="1.45" height="1.45" fill="#222"/><rect x="484.40" y="208.70" width="1.45" height="1.45" fill="#222"/><rect x="487.10" y="208.70" width="1.45" height="1.45" fill="#222"/><rect x="493.85" y="208.70" width="1.45" height="1.45" fill="#222"/><rect x="495.20" y="208.70" width="1.45" height="1.45" fill="#222"/><rect x="497.90" y="208.70" width="1.45" height="1.45" fill="#222"/><rect x="499.25" y="208.70" width="1.45" height="1.45" fill="#222"/><rect x="500.60" y="208.70" width="1.45" height="1.45" fill="#222"/><rect x="501.95" y="208.70" width="1.45" height="1.45" fill="#222"/><rect x="503.30" y="208.70" width="1.45" height="1.45" fill="#222"/><rect x="506.00" y="208.70" width="1.45" height="1.45" fill="#222"/><rect x="507.35" y="208.70" width="1.45" height="1.45" fill="#222"/><rect x="508.70" y="208.70" width="1.45" height="1.45" fill="#222"/><rect x="511.40" y="208.70" width="1.45" height="1.45" fill="#222"/><rect x="512.75" y="208.70" width="1.45" height="1.45" fill="#222"/><rect x="514.10" y="208.70" width="1.45" height="1.45" fill="#222"/><rect x="519.50" y="208.70" width="1.45" height="1.45" fill="#222"/><rect x="520.85" y="208.70" width="1.45" height="1.45" fill="#222"/><rect x="479.00" y="210.05" width="1.45" height="1.45" fill="#222"/><rect x="483.05" y="210.05" width="1.45" height="1.45" fill="#222"/><rect x="484.40" y="210.05" width="1.45" height="1.45" fill="#222"/><rect x="485.75" y="210.05" width="1.45" height="1.45" fill="#222"/><rect x="487.10" y="210.05" width="1.45" height="1.45" fill="#222"/><rect x="488.45" y="210.05" width="1.45" height="1.45" fill="#222"/><rect x="491.15" y="210.05" width="1.45" height="1.45" fill="#222"/><rect x="492.50" y="210.05" width="1.45" height="1.45" fill="#222"/><rect x="493.85" y="210.05" width="1.45" height="1.45" fill="#222"/><rect x="495.20" y="210.05" width="1.45" height="1.45" fill="#222"/><rect x="496.55" y="210.05" width="1.45" height="1.45" fill="#222"/><rect x="500.60" y="210.05" width="1.45" height="1.45" fill="#222"/><rect x="504.65" y="210.05" width="1.45" height="1.45" fill="#222"/><rect x="511.40" y="210.05" width="1.45" height="1.45" fill="#222"/><rect x="512.75" y="210.05" width="1.45" height="1.45" fill="#222"/><rect x="514.10" y="210.05" width="1.45" height="1.45" fill="#222"/><rect x="516.80" y="210.05" width="1.45" height="1.45" fill="#222"/><rect x="518.15" y="210.05" width="1.45" height="1.45" fill="#222"/><rect x="519.50" y="210.05" width="1.45" height="1.45" fill="#222"/><rect x="520.85" y="210.05" width="1.45" height="1.45" fill="#222"/><rect x="479.00" y="211.40" width="1.45" height="1.45" fill="#222"/><rect x="480.35" y="211.40" width="1.45" height="1.45" fill="#222"/><rect x="481.70" y="211.40" width="1.45" height="1.45" fill="#222"/><rect x="483.05" y="211.40" width="1.45" height="1.45" fill="#222"/><rect x="484.40" y="211.40" width="1.45" height="1.45" fill="#222"/><rect x="485.75" y="211.40" width="1.45" height="1.45" fill="#222"/><rect x="487.10" y="211.40" width="1.45" height="1.45" fill="#222"/><rect x="491.15" y="211.40" width="1.45" height="1.45" fill="#222"/><rect x="492.50" y="211.40" width="1.45" height="1.45" fill="#222"/><rect x="493.85" y="211.40" width="1.45" height="1.45" fill="#222"/><rect x="495.20" y="211.40" width="1.45" height="1.45" fill="#222"/><rect x="496.55" y="211.40" width="1.45" height="1.45" fill="#222"/><rect x="500.60" y="211.40" width="1.45" height="1.45" fill="#222"/><rect x="501.95" y="211.40" width="1.45" height="1.45" fill="#222"/><rect x="503.30" y="211.40" width="1.45" height="1.45" fill="#222"/><rect x="504.65" y="211.40" width="1.45" height="1.45" fill="#222"/><rect x="506.00" y="211.40" width="1.45" height="1.45" fill="#222"/><rect x="507.35" y="211.40" width="1.45" height="1.45" fill="#222"/><rect x="510.05" y="211.40" width="1.45" height="1.45" fill="#222"/><rect x="511.40" y="211.40" width="1.45" height="1.45" fill="#222"/><rect x="514.10" y="211.40" width="1.45" height="1.45" fill="#222"/><rect x="515.45" y="211.40" width="1.45" height="1.45" fill="#222"/><rect x="516.80" y="211.40" width="1.45" height="1.45" fill="#222"/><rect x="518.15" y="211.40" width="1.45" height="1.45" fill="#222"/><rect x="519.50" y="211.40" width="1.45" height="1.45" fill="#222"/><rect x="481.70" y="212.75" width="1.45" height="1.45" fill="#222"/><rect x="483.05" y="212.75" width="1.45" height="1.45" fill="#222"/><rect x="484.40" y="212.75" width="1.45" height="1.45" fill="#222"/><rect x="487.10" y="212.75" width="1.45" height="1.45" fill="#222"/><rect x="489.80" y="212.75" width="1.45" height="1.45" fill="#222"/><rect x="491.15" y="212.75" width="1.45" height="1.45" fill="#222"/><rect x="500.60" y="212.75" width="1.45" height="1.45" fill="#222"/><rect x="501.95" y="212.75" width="1.45" height="1.45" fill="#222"/><rect x="503.30" y="212.75" width="1.45" height="1.45" fill="#222"/><rect x="504.65" y="212.75" width="1.45" height="1.45" fill="#222"/><rect x="506.00" y="212.75" width="1.45" height="1.45" fill="#222"/><rect x="507.35" y="212.75" width="1.45" height="1.45" fill="#222"/><rect x="508.70" y="212.75" width="1.45" height="1.45" fill="#222"/><rect x="512.75" y="212.75" width="1.45" height="1.45" fill="#222"/><rect x="518.15" y="212.75" width="1.45" height="1.45" fill="#222"/><rect x="519.50" y="212.75" width="1.45" height="1.45" fill="#222"/><rect x="520.85" y="212.75" width="1.45" height="1.45" fill="#222"/><rect x="479.00" y="214.10" width="1.45" height="1.45" fill="#222"/><rect x="480.35" y="214.10" width="1.45" height="1.45" fill="#222"/><rect x="485.75" y="214.10" width="1.45" height="1.45" fill="#222"/><rect x="489.80" y="214.10" width="1.45" height="1.45" fill="#222"/><rect x="496.55" y="214.10" width="1.45" height="1.45" fill="#222"/><rect x="497.90" y="214.10" width="1.45" height="1.45" fill="#222"/><rect x="500.60" y="214.10" width="1.45" height="1.45" fill="#222"/><rect x="504.65" y="214.10" width="1.45" height="1.45" fill="#222"/><rect x="506.00" y="214.10" width="1.45" height="1.45" fill="#222"/><rect x="510.05" y="214.10" width="1.45" height="1.45" fill="#222"/><rect x="511.40" y="214.10" width="1.45" height="1.45" fill="#222"/><rect x="512.75" y="214.10" width="1.45" height="1.45" fill="#222"/><rect x="516.80" y="214.10" width="1.45" height="1.45" fill="#222"/><rect x="479.00" y="215.45" width="1.45" height="1.45" fill="#222"/><rect x="480.35" y="215.45" width="1.45" height="1.45" fill="#222"/><rect x="481.70" y="215.45" width="1.45" height="1.45" fill="#222"/><rect x="483.05" y="215.45" width="1.45" height="1.45" fill="#222"/><rect x="487.10" y="215.45" width="1.45" height="1.45" fill="#222"/><rect x="489.80" y="215.45" width="1.45" height="1.45" fill="#222"/><rect x="493.85" y="215.45" width="1.45" height="1.45" fill="#222"/><rect x="495.20" y="215.45" width="1.45" height="1.45" fill="#222"/><rect x="496.55" y="215.45" width="1.45" height="1.45" fill="#222"/><rect x="497.90" y="215.45" width="1.45" height="1.45" fill="#222"/><rect x="500.60" y="215.45" width="1.45" height="1.45" fill="#222"/><rect x="501.95" y="215.45" width="1.45" height="1.45" fill="#222"/><rect x="503.30" y="215.45" width="1.45" height="1.45" fill="#222"/><rect x="506.00" y="215.45" width="1.45" height="1.45" fill="#222"/><rect x="507.35" y="215.45" width="1.45" height="1.45" fill="#222"/><rect x="511.40" y="215.45" width="1.45" height="1.45" fill="#222"/><rect x="514.10" y="215.45" width="1.45" height="1.45" fill="#222"/><rect x="515.45" y="215.45" width="1.45" height="1.45" fill="#222"/><rect x="516.80" y="215.45" width="1.45" height="1.45" fill="#222"/><rect x="518.15" y="215.45" width="1.45" height="1.45" fill="#222"/><rect x="519.50" y="215.45" width="1.45" height="1.45" fill="#222"/><rect x="520.85" y="215.45" width="1.45" height="1.45" fill="#222"/><rect x="479.00" y="216.80" width="1.45" height="1.45" fill="#222"/><rect x="481.70" y="216.80" width="1.45" height="1.45" fill="#222"/><rect x="483.05" y="216.80" width="1.45" height="1.45" fill="#222"/><rect x="485.75" y="216.80" width="1.45" height="1.45" fill="#222"/><rect x="487.10" y="216.80" width="1.45" height="1.45" fill="#222"/><rect x="488.45" y="216.80" width="1.45" height="1.45" fill="#222"/><rect x="489.80" y="216.80" width="1.45" height="1.45" fill="#222"/><rect x="492.50" y="216.80" width="1.45" height="1.45" fill="#222"/><rect x="493.85" y="216.80" width="1.45" height="1.45" fill="#222"/><rect x="495.20" y="216.80" width="1.45" height="1.45" fill="#222"/><rect x="496.55" y="216.80" width="1.45" height="1.45" fill="#222"/><rect x="499.25" y="216.80" width="1.45" height="1.45" fill="#222"/><rect x="500.60" y="216.80" width="1.45" height="1.45" fill="#222"/><rect x="504.65" y="216.80" width="1.45" height="1.45" fill="#222"/><rect x="507.35" y="216.80" width="1.45" height="1.45" fill="#222"/><rect x="508.70" y="216.80" width="1.45" height="1.45" fill="#222"/><rect x="511.40" y="216.80" width="1.45" height="1.45" fill="#222"/><rect x="512.75" y="216.80" width="1.45" height="1.45" fill="#222"/><rect x="514.10" y="216.80" width="1.45" height="1.45" fill="#222"/><rect x="520.85" y="216.80" width="1.45" height="1.45" fill="#222"/><rect x="479.00" y="218.15" width="1.45" height="1.45" fill="#222"/><rect x="483.05" y="218.15" width="1.45" height="1.45" fill="#222"/><rect x="484.40" y="218.15" width="1.45" height="1.45" fill="#222"/><rect x="485.75" y="218.15" width="1.45" height="1.45" fill="#222"/><rect x="487.10" y="218.15" width="1.45" height="1.45" fill="#222"/><rect x="488.45" y="218.15" width="1.45" height="1.45" fill="#222"/><rect x="489.80" y="218.15" width="1.45" height="1.45" fill="#222"/><rect x="495.20" y="218.15" width="1.45" height="1.45" fill="#222"/><rect x="499.25" y="218.15" width="1.45" height="1.45" fill="#222"/><rect x="503.30" y="218.15" width="1.45" height="1.45" fill="#222"/><rect x="506.00" y="218.15" width="1.45" height="1.45" fill="#222"/><rect x="507.35" y="218.15" width="1.45" height="1.45" fill="#222"/><rect x="511.40" y="218.15" width="1.45" height="1.45" fill="#222"/><rect x="512.75" y="218.15" width="1.45" height="1.45" fill="#222"/><rect x="514.10" y="218.15" width="1.45" height="1.45" fill="#222"/><rect x="515.45" y="218.15" width="1.45" height="1.45" fill="#222"/><rect x="516.80" y="218.15" width="1.45" height="1.45" fill="#222"/><rect x="518.15" y="218.15" width="1.45" height="1.45" fill="#222"/><rect x="520.85" y="218.15" width="1.45" height="1.45" fill="#222"/><rect x="620.3" y="254.3" width="75" height="32.6" rx="3.5" fill="#fff" stroke="#b5b5b5" stroke-width="0.8"/><circle cx="631.3" cy="267.3" r="5.2" fill="none" stroke="#111" stroke-width="2.8"/><path d="M626.1 267 V274.6" stroke="#111" stroke-width="2.8"/><circle cx="626.1" cy="277.4" r="1.6" fill="#111"/><rect x="675.16" y="256.20" width="1.20" height="1.20" fill="#1a1a1a"/><rect x="676.28" y="256.20" width="1.20" height="1.20" fill="#1a1a1a"/><rect x="677.40" y="256.20" width="1.20" height="1.20" fill="#1a1a1a"/><rect x="680.76" y="256.20" width="1.20" height="1.20" fill="#1a1a1a"/><rect x="685.24" y="256.20" width="1.20" height="1.20" fill="#1a1a1a"/><rect x="674.04" y="257.32" width="1.20" height="1.20" fill="#1a1a1a"/><rect x="675.16" y="257.32" width="1.20" height="1.20" fill="#1a1a1a"/><rect x="677.40" y="257.32" width="1.20" height="1.20" fill="#1a1a1a"/><rect x="678.52" y="257.32" width="1.20" height="1.20" fill="#1a1a1a"/><rect x="679.64" y="257.32" width="1.20" height="1.20" fill="#1a1a1a"/><rect x="683.00" y="257.32" width="1.20" height="1.20" fill="#1a1a1a"/><rect x="684.12" y="257.32" width="1.20" height="1.20" fill="#1a1a1a"/><rect x="676.28" y="258.44" width="1.20" height="1.20" fill="#1a1a1a"/><rect x="677.40" y="258.44" width="1.20" height="1.20" fill="#1a1a1a"/><rect x="679.64" y="258.44" width="1.20" height="1.20" fill="#1a1a1a"/><rect x="680.76" y="258.44" width="1.20" height="1.20" fill="#1a1a1a"/><rect x="685.24" y="258.44" width="1.20" height="1.20" fill="#1a1a1a"/><rect x="675.16" y="259.56" width="1.20" height="1.20" fill="#1a1a1a"/><rect x="677.40" y="259.56" width="1.20" height="1.20" fill="#1a1a1a"/><rect x="678.52" y="259.56" width="1.20" height="1.20" fill="#1a1a1a"/><rect x="681.88" y="259.56" width="1.20" height="1.20" fill="#1a1a1a"/><rect x="683.00" y="259.56" width="1.20" height="1.20" fill="#1a1a1a"/><rect x="685.24" y="259.56" width="1.20" height="1.20" fill="#1a1a1a"/><rect x="674.04" y="260.68" width="1.20" height="1.20" fill="#1a1a1a"/><rect x="675.16" y="260.68" width="1.20" height="1.20" fill="#1a1a1a"/><rect x="676.28" y="260.68" width="1.20" height="1.20" fill="#1a1a1a"/><rect x="677.40" y="260.68" width="1.20" height="1.20" fill="#1a1a1a"/><rect x="678.52" y="260.68" width="1.20" height="1.20" fill="#1a1a1a"/><rect x="679.64" y="260.68" width="1.20" height="1.20" fill="#1a1a1a"/><rect x="681.88" y="260.68" width="1.20" height="1.20" fill="#1a1a1a"/><rect x="684.12" y="260.68" width="1.20" height="1.20" fill="#1a1a1a"/><rect x="685.24" y="260.68" width="1.20" height="1.20" fill="#1a1a1a"/><rect x="674.04" y="261.80" width="1.20" height="1.20" fill="#1a1a1a"/><rect x="675.16" y="261.80" width="1.20" height="1.20" fill="#1a1a1a"/><rect x="676.28" y="261.80" width="1.20" height="1.20" fill="#1a1a1a"/><rect x="679.64" y="261.80" width="1.20" height="1.20" fill="#1a1a1a"/><rect x="680.76" y="261.80" width="1.20" height="1.20" fill="#1a1a1a"/><rect x="683.00" y="261.80" width="1.20" height="1.20" fill="#1a1a1a"/><rect x="685.24" y="261.80" width="1.20" height="1.20" fill="#1a1a1a"/><rect x="674.04" y="262.92" width="1.20" height="1.20" fill="#1a1a1a"/><rect x="676.28" y="262.92" width="1.20" height="1.20" fill="#1a1a1a"/><rect x="680.76" y="262.92" width="1.20" height="1.20" fill="#1a1a1a"/><rect x="685.24" y="262.92" width="1.20" height="1.20" fill="#1a1a1a"/><rect x="666.20" y="264.04" width="1.20" height="1.20" fill="#1a1a1a"/><rect x="667.32" y="264.04" width="1.20" height="1.20" fill="#1a1a1a"/><rect x="668.44" y="264.04" width="1.20" height="1.20" fill="#1a1a1a"/><rect x="669.56" y="264.04" width="1.20" height="1.20" fill="#1a1a1a"/><rect x="671.80" y="264.04" width="1.20" height="1.20" fill="#1a1a1a"/><rect x="672.92" y="264.04" width="1.20" height="1.20" fill="#1a1a1a"/><rect x="674.04" y="264.04" width="1.20" height="1.20" fill="#1a1a1a"/><rect x="678.52" y="264.04" width="1.20" height="1.20" fill="#1a1a1a"/><rect x="679.64" y="264.04" width="1.20" height="1.20" fill="#1a1a1a"/><rect x="680.76" y="264.04" width="1.20" height="1.20" fill="#1a1a1a"/><rect x="681.88" y="264.04" width="1.20" height="1.20" fill="#1a1a1a"/><rect x="683.00" y="264.04" width="1.20" height="1.20" fill="#1a1a1a"/><rect x="684.12" y="264.04" width="1.20" height="1.20" fill="#1a1a1a"/><rect x="685.24" y="264.04" width="1.20" height="1.20" fill="#1a1a1a"/><rect x="689.72" y="264.04" width="1.20" height="1.20" fill="#1a1a1a"/><rect x="691.96" y="264.04" width="1.20" height="1.20" fill="#1a1a1a"/><rect x="693.08" y="264.04" width="1.20" height="1.20" fill="#1a1a1a"/><rect x="666.20" y="265.16" width="1.20" height="1.20" fill="#1a1a1a"/><rect x="667.32" y="265.16" width="1.20" height="1.20" fill="#1a1a1a"/><rect x="668.44" y="265.16" width="1.20" height="1.20" fill="#1a1a1a"/><rect x="670.68" y="265.16" width="1.20" height="1.20" fill="#1a1a1a"/><rect x="672.92" y="265.16" width="1.20" height="1.20" fill="#1a1a1a"/><rect x="674.04" y="265.16" width="1.20" height="1.20" fill="#1a1a1a"/><rect x="675.16" y="265.16" width="1.20" height="1.20" fill="#1a1a1a"/><rect x="676.28" y="265.16" width="1.20" height="1.20" fill="#1a1a1a"/><rect x="677.40" y="265.16" width="1.20" height="1.20" fill="#1a1a1a"/><rect x="678.52" y="265.16" width="1.20" height="1.20" fill="#1a1a1a"/><rect x="679.64" y="265.16" width="1.20" height="1.20" fill="#1a1a1a"/><rect x="680.76" y="265.16" width="1.20" height="1.20" fill="#1a1a1a"/><rect x="688.60" y="265.16" width="1.20" height="1.20" fill="#1a1a1a"/><rect x="689.72" y="265.16" width="1.20" height="1.20" fill="#1a1a1a"/><rect x="691.96" y="265.16" width="1.20" height="1.20" fill="#1a1a1a"/><rect x="667.32" y="266.28" width="1.20" height="1.20" fill="#1a1a1a"/><rect x="674.04" y="266.28" width="1.20" height="1.20" fill="#1a1a1a"/><rect x="685.24" y="266.28" width="1.20" height="1.20" fill="#1a1a1a"/><rect x="686.36" y="266.28" width="1.20" height="1.20" fill="#1a1a1a"/><rect x="687.48" y="266.28" width="1.20" height="1.20" fill="#1a1a1a"/><rect x="688.60" y="266.28" width="1.20" height="1.20" fill="#1a1a1a"/><rect x="689.72" y="266.28" width="1.20" height="1.20" fill="#1a1a1a"/><rect x="668.44" y="267.40" width="1.20" height="1.20" fill="#1a1a1a"/><rect x="669.56" y="267.40" width="1.20" height="1.20" fill="#1a1a1a"/><rect x="676.28" y="267.40" width="1.20" height="1.20" fill="#1a1a1a"/><rect x="678.52" y="267.40" width="1.20" height="1.20" fill="#1a1a1a"/><rect x="679.64" y="267.40" width="1.20" height="1.20" fill="#1a1a1a"/><rect x="680.76" y="267.40" width="1.20" height="1.20" fill="#1a1a1a"/><rect x="683.00" y="267.40" width="1.20" height="1.20" fill="#1a1a1a"/><rect x="686.36" y="267.40" width="1.20" height="1.20" fill="#1a1a1a"/><rect x="687.48" y="267.40" width="1.20" height="1.20" fill="#1a1a1a"/><rect x="688.60" y="267.40" width="1.20" height="1.20" fill="#1a1a1a"/><rect x="666.20" y="268.52" width="1.20" height="1.20" fill="#1a1a1a"/><rect x="667.32" y="268.52" width="1.20" height="1.20" fill="#1a1a1a"/><rect x="668.44" y="268.52" width="1.20" height="1.20" fill="#1a1a1a"/><rect x="670.68" y="268.52" width="1.20" height="1.20" fill="#1a1a1a"/><rect x="672.92" y="268.52" width="1.20" height="1.20" fill="#1a1a1a"/><rect x="674.04" y="268.52" width="1.20" height="1.20" fill="#1a1a1a"/><rect x="675.16" y="268.52" width="1.20" height="1.20" fill="#1a1a1a"/><rect x="679.64" y="268.52" width="1.20" height="1.20" fill="#1a1a1a"/><rect x="681.88" y="268.52" width="1.20" height="1.20" fill="#1a1a1a"/><rect x="683.00" y="268.52" width="1.20" height="1.20" fill="#1a1a1a"/><rect x="684.12" y="268.52" width="1.20" height="1.20" fill="#1a1a1a"/><rect x="686.36" y="268.52" width="1.20" height="1.20" fill="#1a1a1a"/><rect x="689.72" y="268.52" width="1.20" height="1.20" fill="#1a1a1a"/><rect x="690.84" y="268.52" width="1.20" height="1.20" fill="#1a1a1a"/><rect x="666.20" y="269.64" width="1.20" height="1.20" fill="#1a1a1a"/><rect x="667.32" y="269.64" width="1.20" height="1.20" fill="#1a1a1a"/><rect x="668.44" y="269.64" width="1.20" height="1.20" fill="#1a1a1a"/><rect x="670.68" y="269.64" width="1.20" height="1.20" fill="#1a1a1a"/><rect x="672.92" y="269.64" width="1.20" height="1.20" fill="#1a1a1a"/><rect x="676.28" y="269.64" width="1.20" height="1.20" fill="#1a1a1a"/><rect x="681.88" y="269.64" width="1.20" height="1.20" fill="#1a1a1a"/><rect x="684.12" y="269.64" width="1.20" height="1.20" fill="#1a1a1a"/><rect x="685.24" y="269.64" width="1.20" height="1.20" fill="#1a1a1a"/><rect x="686.36" y="269.64" width="1.20" height="1.20" fill="#1a1a1a"/><rect x="687.48" y="269.64" width="1.20" height="1.20" fill="#1a1a1a"/><rect x="688.60" y="269.64" width="1.20" height="1.20" fill="#1a1a1a"/><rect x="689.72" y="269.64" width="1.20" height="1.20" fill="#1a1a1a"/><rect x="690.84" y="269.64" width="1.20" height="1.20" fill="#1a1a1a"/><rect x="691.96" y="269.64" width="1.20" height="1.20" fill="#1a1a1a"/><rect x="693.08" y="269.64" width="1.20" height="1.20" fill="#1a1a1a"/><rect x="667.32" y="270.76" width="1.20" height="1.20" fill="#1a1a1a"/><rect x="670.68" y="270.76" width="1.20" height="1.20" fill="#1a1a1a"/><rect x="675.16" y="270.76" width="1.20" height="1.20" fill="#1a1a1a"/><rect x="676.28" y="270.76" width="1.20" height="1.20" fill="#1a1a1a"/><rect x="677.40" y="270.76" width="1.20" height="1.20" fill="#1a1a1a"/><rect x="680.76" y="270.76" width="1.20" height="1.20" fill="#1a1a1a"/><rect x="681.88" y="270.76" width="1.20" height="1.20" fill="#1a1a1a"/><rect x="683.00" y="270.76" width="1.20" height="1.20" fill="#1a1a1a"/><rect x="684.12" y="270.76" width="1.20" height="1.20" fill="#1a1a1a"/><rect x="685.24" y="270.76" width="1.20" height="1.20" fill="#1a1a1a"/><rect x="687.48" y="270.76" width="1.20" height="1.20" fill="#1a1a1a"/><rect x="689.72" y="270.76" width="1.20" height="1.20" fill="#1a1a1a"/><rect x="690.84" y="270.76" width="1.20" height="1.20" fill="#1a1a1a"/><rect x="693.08" y="270.76" width="1.20" height="1.20" fill="#1a1a1a"/><rect x="666.20" y="271.88" width="1.20" height="1.20" fill="#1a1a1a"/><rect x="676.28" y="271.88" width="1.20" height="1.20" fill="#1a1a1a"/><rect x="678.52" y="271.88" width="1.20" height="1.20" fill="#1a1a1a"/><rect x="681.88" y="271.88" width="1.20" height="1.20" fill="#1a1a1a"/><rect x="683.00" y="271.88" width="1.20" height="1.20" fill="#1a1a1a"/><rect x="685.24" y="271.88" width="1.20" height="1.20" fill="#1a1a1a"/><rect x="686.36" y="271.88" width="1.20" height="1.20" fill="#1a1a1a"/><rect x="687.48" y="271.88" width="1.20" height="1.20" fill="#1a1a1a"/><rect x="688.60" y="271.88" width="1.20" height="1.20" fill="#1a1a1a"/><rect x="691.96" y="271.88" width="1.20" height="1.20" fill="#1a1a1a"/><rect x="666.20" y="273.00" width="1.20" height="1.20" fill="#1a1a1a"/><rect x="668.44" y="273.00" width="1.20" height="1.20" fill="#1a1a1a"/><rect x="669.56" y="273.00" width="1.20" height="1.20" fill="#1a1a1a"/><rect x="670.68" y="273.00" width="1.20" height="1.20" fill="#1a1a1a"/><rect x="671.80" y="273.00" width="1.20" height="1.20" fill="#1a1a1a"/><rect x="674.04" y="273.00" width="1.20" height="1.20" fill="#1a1a1a"/><rect x="675.16" y="273.00" width="1.20" height="1.20" fill="#1a1a1a"/><rect x="678.52" y="273.00" width="1.20" height="1.20" fill="#1a1a1a"/><rect x="679.64" y="273.00" width="1.20" height="1.20" fill="#1a1a1a"/><rect x="680.76" y="273.00" width="1.20" height="1.20" fill="#1a1a1a"/><rect x="681.88" y="273.00" width="1.20" height="1.20" fill="#1a1a1a"/><rect x="683.00" y="273.00" width="1.20" height="1.20" fill="#1a1a1a"/><rect x="684.12" y="273.00" width="1.20" height="1.20" fill="#1a1a1a"/><rect x="685.24" y="273.00" width="1.20" height="1.20" fill="#1a1a1a"/><rect x="686.36" y="273.00" width="1.20" height="1.20" fill="#1a1a1a"/><rect x="690.84" y="273.00" width="1.20" height="1.20" fill="#1a1a1a"/><rect x="691.96" y="273.00" width="1.20" height="1.20" fill="#1a1a1a"/><rect x="666.20" y="274.12" width="1.20" height="1.20" fill="#1a1a1a"/><rect x="667.32" y="274.12" width="1.20" height="1.20" fill="#1a1a1a"/><rect x="668.44" y="274.12" width="1.20" height="1.20" fill="#1a1a1a"/><rect x="669.56" y="274.12" width="1.20" height="1.20" fill="#1a1a1a"/><rect x="671.80" y="274.12" width="1.20" height="1.20" fill="#1a1a1a"/><rect x="676.28" y="274.12" width="1.20" height="1.20" fill="#1a1a1a"/><rect x="677.40" y="274.12" width="1.20" height="1.20" fill="#1a1a1a"/><rect x="678.52" y="274.12" width="1.20" height="1.20" fill="#1a1a1a"/><rect x="679.64" y="274.12" width="1.20" height="1.20" fill="#1a1a1a"/><rect x="680.76" y="274.12" width="1.20" height="1.20" fill="#1a1a1a"/><rect x="685.24" y="274.12" width="1.20" height="1.20" fill="#1a1a1a"/><rect x="686.36" y="274.12" width="1.20" height="1.20" fill="#1a1a1a"/><rect x="689.72" y="274.12" width="1.20" height="1.20" fill="#1a1a1a"/><rect x="691.96" y="274.12" width="1.20" height="1.20" fill="#1a1a1a"/><rect x="693.08" y="274.12" width="1.20" height="1.20" fill="#1a1a1a"/><rect x="670.68" y="275.24" width="1.20" height="1.20" fill="#1a1a1a"/><rect x="671.80" y="275.24" width="1.20" height="1.20" fill="#1a1a1a"/><rect x="672.92" y="275.24" width="1.20" height="1.20" fill="#1a1a1a"/><rect x="680.76" y="275.24" width="1.20" height="1.20" fill="#1a1a1a"/><rect x="683.00" y="275.24" width="1.20" height="1.20" fill="#1a1a1a"/><rect x="685.24" y="275.24" width="1.20" height="1.20" fill="#1a1a1a"/><rect x="688.60" y="275.24" width="1.20" height="1.20" fill="#1a1a1a"/><rect x="689.72" y="275.24" width="1.20" height="1.20" fill="#1a1a1a"/><rect x="690.84" y="275.24" width="1.20" height="1.20" fill="#1a1a1a"/><rect x="674.04" y="276.36" width="1.20" height="1.20" fill="#1a1a1a"/><rect x="675.16" y="276.36" width="1.20" height="1.20" fill="#1a1a1a"/><rect x="678.52" y="276.36" width="1.20" height="1.20" fill="#1a1a1a"/><rect x="679.64" y="276.36" width="1.20" height="1.20" fill="#1a1a1a"/><rect x="681.88" y="276.36" width="1.20" height="1.20" fill="#1a1a1a"/><rect x="683.00" y="276.36" width="1.20" height="1.20" fill="#1a1a1a"/><rect x="684.12" y="276.36" width="1.20" height="1.20" fill="#1a1a1a"/><rect x="688.60" y="276.36" width="1.20" height="1.20" fill="#1a1a1a"/><rect x="689.72" y="276.36" width="1.20" height="1.20" fill="#1a1a1a"/><rect x="690.84" y="276.36" width="1.20" height="1.20" fill="#1a1a1a"/><rect x="674.04" y="277.48" width="1.20" height="1.20" fill="#1a1a1a"/><rect x="675.16" y="277.48" width="1.20" height="1.20" fill="#1a1a1a"/><rect x="676.28" y="277.48" width="1.20" height="1.20" fill="#1a1a1a"/><rect x="678.52" y="277.48" width="1.20" height="1.20" fill="#1a1a1a"/><rect x="679.64" y="277.48" width="1.20" height="1.20" fill="#1a1a1a"/><rect x="683.00" y="277.48" width="1.20" height="1.20" fill="#1a1a1a"/><rect x="684.12" y="277.48" width="1.20" height="1.20" fill="#1a1a1a"/><rect x="685.24" y="277.48" width="1.20" height="1.20" fill="#1a1a1a"/><rect x="686.36" y="277.48" width="1.20" height="1.20" fill="#1a1a1a"/><rect x="688.60" y="277.48" width="1.20" height="1.20" fill="#1a1a1a"/><rect x="693.08" y="277.48" width="1.20" height="1.20" fill="#1a1a1a"/><rect x="675.16" y="278.60" width="1.20" height="1.20" fill="#1a1a1a"/><rect x="677.40" y="278.60" width="1.20" height="1.20" fill="#1a1a1a"/><rect x="678.52" y="278.60" width="1.20" height="1.20" fill="#1a1a1a"/><rect x="680.76" y="278.60" width="1.20" height="1.20" fill="#1a1a1a"/><rect x="683.00" y="278.60" width="1.20" height="1.20" fill="#1a1a1a"/><rect x="684.12" y="278.60" width="1.20" height="1.20" fill="#1a1a1a"/><rect x="685.24" y="278.60" width="1.20" height="1.20" fill="#1a1a1a"/><rect x="686.36" y="278.60" width="1.20" height="1.20" fill="#1a1a1a"/><rect x="689.72" y="278.60" width="1.20" height="1.20" fill="#1a1a1a"/><rect x="690.84" y="278.60" width="1.20" height="1.20" fill="#1a1a1a"/><rect x="691.96" y="278.60" width="1.20" height="1.20" fill="#1a1a1a"/><rect x="674.04" y="279.72" width="1.20" height="1.20" fill="#1a1a1a"/><rect x="675.16" y="279.72" width="1.20" height="1.20" fill="#1a1a1a"/><rect x="676.28" y="279.72" width="1.20" height="1.20" fill="#1a1a1a"/><rect x="677.40" y="279.72" width="1.20" height="1.20" fill="#1a1a1a"/><rect x="684.12" y="279.72" width="1.20" height="1.20" fill="#1a1a1a"/><rect x="685.24" y="279.72" width="1.20" height="1.20" fill="#1a1a1a"/><rect x="688.60" y="279.72" width="1.20" height="1.20" fill="#1a1a1a"/><rect x="690.84" y="279.72" width="1.20" height="1.20" fill="#1a1a1a"/><rect x="691.96" y="279.72" width="1.20" height="1.20" fill="#1a1a1a"/><rect x="693.08" y="279.72" width="1.20" height="1.20" fill="#1a1a1a"/><rect x="674.04" y="280.84" width="1.20" height="1.20" fill="#1a1a1a"/><rect x="675.16" y="280.84" width="1.20" height="1.20" fill="#1a1a1a"/><rect x="676.28" y="280.84" width="1.20" height="1.20" fill="#1a1a1a"/><rect x="677.40" y="280.84" width="1.20" height="1.20" fill="#1a1a1a"/><rect x="679.64" y="280.84" width="1.20" height="1.20" fill="#1a1a1a"/><rect x="681.88" y="280.84" width="1.20" height="1.20" fill="#1a1a1a"/><rect x="683.00" y="280.84" width="1.20" height="1.20" fill="#1a1a1a"/><rect x="686.36" y="280.84" width="1.20" height="1.20" fill="#1a1a1a"/><rect x="687.48" y="280.84" width="1.20" height="1.20" fill="#1a1a1a"/><rect x="688.60" y="280.84" width="1.20" height="1.20" fill="#1a1a1a"/><rect x="689.72" y="280.84" width="1.20" height="1.20" fill="#1a1a1a"/><rect x="691.96" y="280.84" width="1.20" height="1.20" fill="#1a1a1a"/><rect x="693.08" y="280.84" width="1.20" height="1.20" fill="#1a1a1a"/><rect x="675.16" y="281.96" width="1.20" height="1.20" fill="#1a1a1a"/><rect x="676.28" y="281.96" width="1.20" height="1.20" fill="#1a1a1a"/><rect x="679.64" y="281.96" width="1.20" height="1.20" fill="#1a1a1a"/><rect x="680.76" y="281.96" width="1.20" height="1.20" fill="#1a1a1a"/><rect x="681.88" y="281.96" width="1.20" height="1.20" fill="#1a1a1a"/><rect x="684.12" y="281.96" width="1.20" height="1.20" fill="#1a1a1a"/><rect x="687.48" y="281.96" width="1.20" height="1.20" fill="#1a1a1a"/><rect x="688.60" y="281.96" width="1.20" height="1.20" fill="#1a1a1a"/><rect x="691.96" y="281.96" width="1.20" height="1.20" fill="#1a1a1a"/><rect x="674.04" y="283.08" width="1.20" height="1.20" fill="#1a1a1a"/><rect x="675.16" y="283.08" width="1.20" height="1.20" fill="#1a1a1a"/><rect x="676.28" y="283.08" width="1.20" height="1.20" fill="#1a1a1a"/><rect x="681.88" y="283.08" width="1.20" height="1.20" fill="#1a1a1a"/><rect x="683.00" y="283.08" width="1.20" height="1.20" fill="#1a1a1a"/><rect x="684.12" y="283.08" width="1.20" height="1.20" fill="#1a1a1a"/><rect x="687.48" y="283.08" width="1.20" height="1.20" fill="#1a1a1a"/><rect x="688.60" y="283.08" width="1.20" height="1.20" fill="#1a1a1a"/><rect x="689.72" y="283.08" width="1.20" height="1.20" fill="#1a1a1a"/><rect x="690.84" y="283.08" width="1.20" height="1.20" fill="#1a1a1a"/><rect x="693.08" y="283.08" width="1.20" height="1.20" fill="#1a1a1a"/><rect x="666.76" y="256.76" width="6.72" height="6.72" fill="#fff" stroke="#1a1a1a" stroke-width="1.12"/><rect x="668.44" y="258.44" width="3.36" height="3.36" fill="#1a1a1a"/><rect x="686.92" y="256.76" width="6.72" height="6.72" fill="#fff" stroke="#1a1a1a" stroke-width="1.12"/><rect x="688.60" y="258.44" width="3.36" height="3.36" fill="#1a1a1a"/><rect x="666.76" y="276.92" width="6.72" height="6.72" fill="#fff" stroke="#1a1a1a" stroke-width="1.12"/><rect x="668.44" y="278.60" width="3.36" height="3.36" fill="#1a1a1a"/><path d="M405.5 290.2 H489" stroke="#555" stroke-width="0.9"/><path d="M512.6 290.2 H584.7" stroke="#555" stroke-width="0.9"/><path d="M603.5 290.2 H707.5" stroke="#555" stroke-width="0.9"/><path d="M401.4 351.6 H584.7" stroke="#222" stroke-width="1.1"/><path d="M507.6 298.4 L512.4 300.8 L507.6 303.2 Z" fill="#111"/><rect x="698.8" y="313.60" width="6.5" height="1.2" fill="#1a1a1a"/><rect x="698.8" y="315.60" width="6.5" height="2.3" fill="#1a1a1a"/><rect x="698.8" y="318.70" width="6.5" height="1.2" fill="#1a1a1a"/><rect x="698.8" y="321.00" width="6.5" height="1.8" fill="#1a1a1a"/><rect x="698.8" y="323.90" width="6.5" height="2.3" fill="#1a1a1a"/><rect x="698.8" y="326.80" width="6.5" height="2.3" fill="#1a1a1a"/><rect x="698.8" y="329.90" width="6.5" height="1.8" fill="#1a1a1a"/><rect x="698.8" y="332.50" width="6.5" height="0.7" fill="#1a1a1a"/><rect x="698.8" y="334.70" width="6.5" height="0.7" fill="#1a1a1a"/><rect x="698.8" y="336.00" width="6.5" height="1.8" fill="#1a1a1a"/><rect x="698.8" y="338.90" width="6.5" height="0.7" fill="#1a1a1a"/><rect x="698.8" y="341.10" width="6.5" height="0.7" fill="#1a1a1a"/><rect x="698.8" y="342.40" width="6.5" height="1.2" fill="#1a1a1a"/><rect x="698.8" y="344.20" width="6.5" height="0.7" fill="#1a1a1a"/><rect x="698.8" y="345.50" width="6.5" height="1.8" fill="#1a1a1a"/><rect x="698.8" y="348.80" width="6.5" height="1.8" fill="#1a1a1a"/><rect x="698.8" y="351.40" width="6.5" height="0.7" fill="#1a1a1a"/><rect x="698.8" y="352.90" width="6.5" height="1.8" fill="#1a1a1a"/><rect x="698.8" y="356.20" width="6.5" height="2.3" fill="#1a1a1a"/><rect x="698.8" y="359.30" width="6.5" height="2.3" fill="#1a1a1a"/><rect x="698.8" y="362.20" width="6.5" height="1.2" fill="#1a1a1a"/><rect x="698.8" y="364.50" width="6.5" height="1.2" fill="#1a1a1a"/><rect x="698.8" y="366.80" width="6.5" height="1.2" fill="#1a1a1a"/><rect x="698.8" y="369.10" width="6.5" height="1.2" fill="#1a1a1a"/><rect x="698.8" y="371.10" width="6.5" height="1.8" fill="#1a1a1a"/><rect x="698.8" y="373.70" width="6.5" height="0.7" fill="#1a1a1a"/><rect x="698.8" y="375.20" width="6.5" height="0.7" fill="#1a1a1a"/><rect x="698.8" y="376.70" width="6.5" height="1.2" fill="#1a1a1a"/><rect x="698.8" y="378.70" width="6.5" height="1.2" fill="#1a1a1a"/><rect x="698.8" y="380.50" width="6.5" height="1.8" fill="#1a1a1a"/><rect x="698.8" y="383.40" width="6.5" height="0.7" fill="#1a1a1a"/><path d="M693 394 L697 390.5 L698.5 391.5 V390.3 H700 V396.6 H697.5 L696 395.2 L694.4 396 Z" fill="#222"/><circle cx="398.8" cy="404.6" r="5.2" fill="#151515"/><circle cx="400.8" cy="403.2" r="3.2" fill="#fff"/><path d="M397 399.5 C399 401 400 403 399 406.5" stroke="#fff" stroke-width="0.9" fill="none"/><path id="tag" d="M392 409.5 C398 414.5 412 411 425 415" fill="none"/><text font-family='"Liberation Sans",sans-serif' font-size="3.6" font-weight="bold" fill="#222" textLength="35" lengthAdjust="spacing"><textPath href="#tag">helping life flow smoothly</textPath></text><rect x="435" y="407.2" width="95" height="17" fill="none" stroke="#222" stroke-width="0.9"/><rect x="551.2" y="407.2" width="81.4" height="17" fill="none" stroke="#222" stroke-width="0.9"/><path d="M392.7 441.2 H430" stroke="#222" stroke-width="0.8"/><rect x="430.20" y="439.7" width="0.6" height="10.6" fill="#151515"/><rect x="432.20" y="439.7" width="0.6" height="10.6" fill="#151515"/><rect x="433.30" y="439.7" width="0.6" height="10.6" fill="#151515"/><rect x="435.30" y="439.7" width="0.6" height="10.6" fill="#151515"/><rect x="437.30" y="439.7" width="1.0" height="10.6" fill="#151515"/><rect x="438.80" y="439.7" width="1.0" height="10.6" fill="#151515"/><rect x="440.50" y="439.7" width="0.6" height="10.6" fill="#151515"/><rect x="441.60" y="439.7" width="0.6" height="10.6" fill="#151515"/><rect x="442.90" y="439.7" width="0.6" height="10.6" fill="#151515"/><rect x="444.50" y="439.7" width="2.2" height="10.6" fill="#151515"/><rect x="447.40" y="439.7" width="1.6" height="10.6" fill="#151515"/><rect x="450.00" y="439.7" width="0.6" height="10.6" fill="#151515"/><rect x="451.10" y="439.7" width="2.2" height="10.6" fill="#151515"/><rect x="454.30" y="439.7" width="0.6" height="10.6" fill="#151515"/><rect x="455.40" y="439.7" width="1.0" height="10.6" fill="#151515"/><rect x="457.40" y="439.7" width="0.6" height="10.6" fill="#151515"/><rect x="458.50" y="439.7" width="0.6" height="10.6" fill="#151515"/><rect x="460.10" y="439.7" width="0.6" height="10.6" fill="#151515"/><rect x="461.40" y="439.7" width="0.6" height="10.6" fill="#151515"/><rect x="463.00" y="439.7" width="1.6" height="10.6" fill="#151515"/><rect x="465.60" y="439.7" width="0.6" height="10.6" fill="#151515"/><rect x="467.20" y="439.7" width="0.6" height="10.6" fill="#151515"/><rect x="468.50" y="439.7" width="0.6" height="10.6" fill="#151515"/><rect x="470.50" y="439.7" width="2.2" height="10.6" fill="#151515"/><rect x="474.10" y="439.7" width="0.6" height="10.6" fill="#151515"/><rect x="476.10" y="439.7" width="0.6" height="10.6" fill="#151515"/><rect x="478.10" y="439.7" width="2.2" height="10.6" fill="#151515"/><rect x="481.00" y="439.7" width="2.2" height="10.6" fill="#151515"/><rect x="483.70" y="439.7" width="0.6" height="10.6" fill="#151515"/><rect x="485.70" y="439.7" width="1.0" height="10.6" fill="#151515"/><rect x="488.10" y="439.7" width="1.0" height="10.6" fill="#151515"/><rect x="490.10" y="439.7" width="1.6" height="10.6" fill="#151515"/><rect x="492.20" y="439.7" width="1.0" height="10.6" fill="#151515"/><rect x="494.20" y="439.7" width="1.6" height="10.6" fill="#151515"/><rect x="497.20" y="439.7" width="0.6" height="10.6" fill="#151515"/><rect x="498.80" y="439.7" width="0.6" height="10.6" fill="#151515"/><rect x="500.80" y="439.7" width="1.6" height="10.6" fill="#151515"/><rect x="503.10" y="439.7" width="0.6" height="10.6" fill="#151515"/><rect x="505.10" y="439.7" width="0.6" height="10.6" fill="#151515"/><rect x="507.10" y="439.7" width="0.6" height="10.6" fill="#151515"/><rect x="508.20" y="439.7" width="1.6" height="10.6" fill="#151515"/><rect x="510.80" y="439.7" width="1.6" height="10.6" fill="#151515"/><rect x="513.10" y="439.7" width="0.6" height="10.6" fill="#151515"/><rect x="514.20" y="439.7" width="0.6" height="10.6" fill="#151515"/><rect x="515.50" y="439.7" width="1.6" height="10.6" fill="#151515"/><rect x="517.60" y="439.7" width="2.2" height="10.6" fill="#151515"/><rect x="520.80" y="439.7" width="2.2" height="10.6" fill="#151515"/><path d="M552 449.8 H606.5" stroke="#222" stroke-width="0.8"/><rect x="653.6" y="449.8" width="53.4" height="31.8" fill="none" stroke="#222" stroke-width="0.8"/><path d="M653.6 465.4 H707" stroke="#222" stroke-width="0.8"/><path d="M687.8 449.8 V481.6 M707 481.6 V501 M653.6 501 H707" stroke="#222" stroke-width="0.8" fill="none"/><circle cx="405" cy="473.6" r="16.2" fill="none" stroke="#333" stroke-width="0.8" stroke-dasharray="7 2.6"/><path d="M397 489.9 H448" stroke="#333" stroke-width="0.9"/><rect x="474.4" y="481.3" width="47.6" height="19.3" fill="none" stroke="#222" stroke-width="0.9"/><path d="M471 490.5 H474.4" stroke="#333" stroke-width="0.8"/><path d="M373.4 500.6 H474.4" stroke="#444" stroke-width="0.9"/><path d="M373.4 507.8 H707" stroke="#444" stroke-width="0.9"/></svg>
<span id="t188" style="position:absolute;left:528.2px;top:138.40px;font:normal bold 4px/1.15 'Liberation Sans',sans-serif;color:#fff;white-space:pre;letter-spacing:0.219px;">0 0 0</span>
<span id="t189" style="position:absolute;left:403.5px;top:156.59px;font:normal normal 5.4px/1.15 'Liberation Sans',sans-serif;color:#444;white-space:pre;letter-spacing:0.085px;">Dindorm Inc</span>
<span id="t190" style="position:absolute;left:403.5px;top:163.09px;font:normal normal 5.4px/1.15 'Liberation Sans',sans-serif;color:#444;white-space:pre;letter-spacing:-0.234px;">89 Cannon St, London EC4N</span>
<span id="t191" style="position:absolute;left:403.5px;top:169.80px;font:normal normal 5.4px/1.15 'Liberation Sans',sans-serif;color:#444;white-space:pre;letter-spacing:-0.060px;">5AD  United Kingdom</span>
<span id="t192" style="position:absolute;left:511.5px;top:191.66px;font:normal normal 3.2px/1.15 'Liberation Sans',sans-serif;color:#555;white-space:pre;transform:rotate(-90deg);">00019</span>
<span id="t193" style="position:absolute;left:618.8px;top:150.55px;font:normal bold 6px/1.15 'DejaVu Sans Condensed','DejaVu Sans',sans-serif;color:#1c1c1c;white-space:pre;letter-spacing:-0.308px;">Your account number</span>
<span id="t194" style="position:absolute;left:618.8px;top:162.40px;font:normal normal 7.3px/1.15 'DejaVu Sans Condensed','DejaVu Sans',sans-serif;color:#1c1c1c;white-space:pre;letter-spacing:0.047px;">423 961 4752</span>
<span id="t195" style="position:absolute;left:618.8px;top:175.05px;font:normal bold 6px/1.15 'DejaVu Sans Condensed','DejaVu Sans',sans-serif;color:#1c1c1c;white-space:pre;letter-spacing:-0.323px;">Bill Date</span>
<span id="t196" style="position:absolute;left:618.8px;top:183.00px;font:normal normal 7.3px/1.15 'DejaVu Sans Condensed','DejaVu Sans',sans-serif;color:#1c1c1c;white-space:pre;letter-spacing:0.039px;">14 July 2023</span>
<span id="t197" style="position:absolute;left:618.8px;top:198.12px;font:normal bold 5.0px/1.15 'DejaVu Sans Condensed','DejaVu Sans',sans-serif;color:#1c1c1c;white-space:pre;letter-spacing:-0.179px;">Freephone payments line</span>
<span id="t198" style="position:absolute;left:618.8px;top:205.81px;font:normal normal 3.8px/1.15 'Liberation Sans',sans-serif;color:#666;white-space:pre;letter-spacing:0.032px;">Make an instant card payment or use online</span>
<span id="t199" style="position:absolute;left:618.8px;top:210.01px;font:normal normal 3.8px/1.15 'Liberation Sans',sans-serif;color:#666;white-space:pre;letter-spacing:-0.188px;">banking</span>
<span id="t200" style="position:absolute;left:618.8px;top:221.00px;font:normal normal 7.3px/1.15 'DejaVu Sans Condensed','DejaVu Sans',sans-serif;color:#1c1c1c;white-space:pre;letter-spacing:0.030px;">0800 980 6050</span>
<span id="t201" style="position:absolute;left:618.8px;top:232.09px;font:normal bold 5.4px/1.15 'DejaVu Sans Condensed','DejaVu Sans',sans-serif;color:#1c1c1c;white-space:pre;letter-spacing:-0.146px;">Pay online - 24 hours a day</span>
<span id="t202" style="position:absolute;left:618.8px;top:241.43px;font:normal normal 6.9px/1.15 'DejaVu Sans Condensed','DejaVu Sans',sans-serif;color:#444;white-space:pre;letter-spacing:0.008px;">unitedutilities.com/paybill</span>
<span id="t203" style="position:absolute;left:689.4px;top:185.09px;font:normal normal 2.8px/1.15 'Liberation Sans',sans-serif;color:#555;white-space:pre;transform:rotate(-90deg);transform-origin:center;">UU/0000/1234/X</span>
<span id="t204" style="position:absolute;left:644px;top:262.66px;font:normal normal 8.6px/1.15 'Liberation Sans',sans-serif;color:#222;white-space:pre;letter-spacing:0.209px;">pingit</span>
<span id="t205" style="position:absolute;left:646px;top:259.88px;font:normal normal 3px/1.15 'Liberation Sans',sans-serif;color:#666;white-space:pre;">Pay with</span>
<span id="t206" style="position:absolute;left:645px;top:271.67px;font:normal normal 3px/1.15 'Liberation Sans',sans-serif;color:#666;white-space:pre;">To pay now</span>
<span id="t207" style="position:absolute;left:408.6px;top:257.70px;font:normal bold 12px/1.15 'DejaVu Sans Condensed','DejaVu Sans',sans-serif;color:#151515;white-space:pre;letter-spacing:-0.033px;">Your water and wastewater bill</span>
<span id="t208" style="position:absolute;left:408.6px;top:274.86px;font:normal normal 7.2px/1.15 'DejaVu Sans Condensed','DejaVu Sans',sans-serif;color:#2a2a2a;white-space:pre;letter-spacing:0.190px;">1 May 2023 to 11 July 2023</span>
<span id="t209" style="position:absolute;left:408.8px;top:290.68px;font:normal normal 7px/1.15 'DejaVu Sans Condensed','DejaVu Sans',sans-serif;color:#555;white-space:pre;letter-spacing:0.009px;">About this bill</span>
<span id="t210" style="position:absolute;left:516.3px;top:290.68px;font:normal normal 7px/1.15 'DejaVu Sans Condensed','DejaVu Sans',sans-serif;color:#555;white-space:pre;letter-spacing:-0.339px;">Charges</span>
<span id="t211" style="position:absolute;left:606.5px;top:290.68px;font:normal normal 7px/1.15 'DejaVu Sans Condensed','DejaVu Sans',sans-serif;color:#555;white-space:pre;letter-spacing:-0.008px;">Amount now due</span>
<span id="t212" style="position:absolute;left:408.8px;top:299.04px;font:normal bold 4.8px/1.15 'DejaVu Sans Condensed','DejaVu Sans',sans-serif;color:#1c1c1c;white-space:pre;letter-spacing:-0.018px;">For water  and wastewater</span>
<span id="t213" style="position:absolute;left:408.8px;top:306.24px;font:normal bold 4.8px/1.15 'DejaVu Sans Condensed','DejaVu Sans',sans-serif;color:#1c1c1c;white-space:pre;letter-spacing:-0.041px;">services at</span>
<span id="t214" style="position:absolute;left:408.8px;top:313.12px;font:normal normal 5px/1.15 'DejaVu Sans Condensed','DejaVu Sans',sans-serif;color:#555;white-space:pre;letter-spacing:0.039px;">22 Billinge Avenue,BLACKBURN</span>
<span id="t215" style="position:absolute;left:408.8px;top:319.93px;font:normal normal 5px/1.15 'DejaVu Sans Condensed','DejaVu Sans',sans-serif;color:#555;white-space:pre;letter-spacing:0.192px;">BB2 6SD</span>
<span id="t216" style="position:absolute;left:516.3px;top:298.64px;font:normal bold 4.8px/1.15 'DejaVu Sans Condensed','DejaVu Sans',sans-serif;color:#1c1c1c;white-space:pre;letter-spacing:-0.126px;">Your charges for this bill are</span>
<span id="t217" style="position:absolute;left:516.3px;top:305.58px;font:normal bold 7px/1.15 'DejaVu Sans Condensed','DejaVu Sans',sans-serif;color:#1c1c1c;white-space:pre;letter-spacing:-0.241px;">£822.39</span>
<span id="t218" style="position:absolute;left:606.4px;top:300.52px;font:normal bold 13px/1.15 'DejaVu Sans Condensed','DejaVu Sans',sans-serif;color:#151515;white-space:pre;letter-spacing:0.103px;">£822.39</span>
<span id="t219" style="position:absolute;left:606.5px;top:317.44px;font:normal bold 4.8px/1.15 'DejaVu Sans Condensed','DejaVu Sans',sans-serif;color:#1c1c1c;white-space:pre;letter-spacing:-0.146px;">Please pay straight away</span>
<span id="t220" style="position:absolute;left:404px;top:352.71px;font:normal bold 9.2px/1.15 'DejaVu Sans Condensed','DejaVu Sans',sans-serif;color:#151515;white-space:pre;letter-spacing:-0.181px;">Pay by Direct Debit and SAVE £5</span>
<span id="t221" style="position:absolute;left:404px;top:365.94px;font:normal normal 3.4px/1.15 'Liberation Sans',sans-serif;color:#444;white-space:pre;letter-spacing:0.254px;">Direct Debit is one of the easiest and most convenient ways to pay your bill,</span>
<span id="t222" style="position:absolute;left:404px;top:370.85px;font:normal normal 3.4px/1.15 'Liberation Sans',sans-serif;color:#444;white-space:pre;letter-spacing:0.275px;">and you’ll also save money - we’ll reduce your annual bill by £5 every year</span>
<span id="t223" style="position:absolute;left:404px;top:375.44px;font:normal normal 3.4px/1.15 'Liberation Sans',sans-serif;color:#333;white-space:pre;letter-spacing:0.175px;">Sign up at unitedutilities.com/dd or call us on 0345 672 2999 Mon - Fri 8am - 8pm</span>
<span id="t224" style="position:absolute;left:493.6px;top:390.35px;font:normal bold 6px/1.15 'DejaVu Sans Condensed','DejaVu Sans',sans-serif;color:#1c1c1c;white-space:pre;letter-spacing:-0.262px;">Payment slip</span>
<span id="t225" style="position:absolute;left:643.2px;top:390.15px;font:normal bold 6px/1.15 'Liberation Sans',sans-serif;color:#1c1c1c;white-space:pre;letter-spacing:0.093px;">bank giro credit</span>
<span id="t226" style="position:absolute;left:406.4px;top:399.78px;font:italic bold 5.6px/1.15 'Liberation Sans',sans-serif;color:#222;white-space:pre;letter-spacing:0.266px;">United</span>
<span id="t227" style="position:absolute;left:406.4px;top:405.98px;font:italic bold 4.2px/1.15 'Liberation Sans',sans-serif;color:#222;white-space:pre;letter-spacing:0.208px;">Utilities</span>
<span id="t228" style="position:absolute;left:439px;top:402.70px;font:normal normal 3.3px/1.15 'Liberation Sans',sans-serif;color:#555;white-space:pre;letter-spacing:0.310px;">Customer account number</span>
<span id="t229" style="position:absolute;left:560px;top:402.70px;font:normal normal 3.3px/1.15 'Liberation Sans',sans-serif;color:#555;white-space:pre;letter-spacing:0.422px;">Amount due</span>
<span id="t230" style="position:absolute;left:459.3px;top:412.32px;font:normal bold 6.4px/1.15 'DejaVu Sans Condensed','DejaVu Sans',sans-serif;color:#222;white-space:pre;letter-spacing:0.148px;">4239614752</span>
<span id="t231" style="position:absolute;left:555.5px;top:412.32px;font:normal bold 6.4px/1.15 'DejaVu Sans Condensed','DejaVu Sans',sans-serif;color:#222;white-space:pre;letter-spacing:-0.023px;">£ 822.39</span>
<span id="t232" style="position:absolute;left:555.5px;top:427.36px;font:normal normal 3.2px/1.15 'Liberation Sans',sans-serif;color:#444;white-space:pre;letter-spacing:0.079px;">CHEQUE  ACCEPTABLE</span>
<span id="t233" style="position:absolute;left:396px;top:433.27px;font:normal normal 3px/1.15 'Liberation Sans',sans-serif;color:#777;white-space:pre;letter-spacing:-0.043px;">MICR</span>
<span id="t234" style="position:absolute;left:437.6px;top:432.36px;font:normal bold 4.6px/1.15 'Liberation Mono',monospace;color:#111;white-space:pre;letter-spacing:0.362px;">6331+0300+23961+7 927</span>
<span id="t235" style="position:absolute;left:555px;top:443.53px;font:normal normal 3.6px/1.15 'Liberation Sans',sans-serif;color:#555;white-space:pre;letter-spacing:0.179px;">Signature</span>
<span id="t236" style="position:absolute;left:634px;top:454.58px;font:normal normal 4.2px/1.15 'Liberation Sans',sans-serif;color:#555;white-space:pre;letter-spacing:-0.235px;">CASH</span>
<span id="t237" style="position:absolute;left:634px;top:470.78px;font:normal normal 4.2px/1.15 'Liberation Sans',sans-serif;color:#555;white-space:pre;letter-spacing:-0.154px;">CHEQUE</span>
<span id="t238" style="position:absolute;left:646.5px;top:490.98px;font:normal bold 7px/1.15 'DejaVu Sans Condensed','DejaVu Sans',sans-serif;color:#222;white-space:pre;">£</span>
<span id="t239" style="position:absolute;left:369.5px;top:463.66px;font:normal normal 3.2px/1.15 'Liberation Sans',sans-serif;color:#555;white-space:pre;transform:rotate(-90deg);transform-origin:center;">DATE  DA  MO</span>
<span id="t240" style="position:absolute;left:397.5px;top:469.88px;font:normal normal 3px/1.15 'Liberation Sans',sans-serif;color:#555;white-space:pre;letter-spacing:-0.174px;">Cashier’s</span>
<span id="t241" style="position:absolute;left:393px;top:473.47px;font:normal normal 3px/1.15 'Liberation Sans',sans-serif;color:#555;white-space:pre;letter-spacing:0.045px;">stamp and initials</span>
<span id="t242" style="position:absolute;left:478px;top:461.88px;font:normal normal 3px/1.15 'Liberation Sans',sans-serif;color:#444;white-space:pre;letter-spacing:-0.230px;">Customer Account Number Barclays</span>
<span id="t243" style="position:absolute;left:478px;top:466.47px;font:normal normal 3px/1.15 'Liberation Sans',sans-serif;color:#444;white-space:pre;letter-spacing:0.027px;">Collection account</span>
<span id="t244" style="position:absolute;left:478px;top:470.07px;font:normal normal 3px/1.15 'Liberation Sans',sans-serif;color:#444;white-space:pre;letter-spacing:0.070px;">United Utilities Water Limited</span>
<span id="t245" style="position:absolute;left:454px;top:483.47px;font:normal normal 3px/1.15 'Liberation Sans',sans-serif;color:#777;white-space:pre;letter-spacing:-0.320px;">DATE</span>
<span id="t246" style="position:absolute;left:478.5px;top:487.15px;font:normal normal 6px/1.15 'Liberation Mono',monospace;color:#666;white-space:pre;letter-spacing:0.586px;">57-01-14</span>
<span id="t247" style="position:absolute;left:477px;top:503.50px;font:normal normal 3.3px/1.15 'Liberation Sans',sans-serif;color:#555;white-space:pre;letter-spacing:0.320px;">Please do not write or mark below this line or fold this voucher</span>
<span id="t248" style="position:absolute;left:471.2px;top:521.15px;font:normal bold 4.6px/1.15 'Liberation Mono',monospace;color:#111;white-space:pre;letter-spacing:1.182px;">&gt;000027413&lt;4239614752800&lt; 570114+&lt; 73   X</span>
<span style="position:absolute;left:853.97px;top:657.7px;font:42px/50px 'DejaVu Sans Light','DejaVu Sans',sans-serif;color:#222;-webkit-text-stroke:0.5px #222;white-space:nowrap;transform-origin:0 0;transform:scaleX(0.7514);">E</span>
<span style="position:absolute;left:870.33px;top:657.7px;font:42px/50px 'DejaVu Sans Light','DejaVu Sans',sans-serif;color:#222;-webkit-text-stroke:0.5px #222;white-space:nowrap;transform-origin:0 0;transform:scaleX(0.8731);">K</span>
<span style="position:absolute;left:893.82px;top:657.7px;font:42px/50px 'DejaVu Sans Light','DejaVu Sans',sans-serif;color:#222;-webkit-text-stroke:0.5px #222;white-space:nowrap;transform-origin:0 0;transform:scaleX(0.8473);">O</span>
<span style="position:absolute;left:919.95px;top:657.7px;font:42px/50px 'DejaVu Sans Light','DejaVu Sans',sans-serif;color:#222;-webkit-text-stroke:0.5px #222;white-space:nowrap;transform-origin:0 0;transform:scaleX(0.8130);">G</span>
<span style="position:absolute;left:945.07px;top:657.7px;font:42px/50px 'DejaVu Sans Light','DejaVu Sans',sans-serif;color:#222;-webkit-text-stroke:0.5px #222;white-space:nowrap;transform-origin:0 0;transform:scaleX(0.7514);">E</span>
<span style="position:absolute;left:963.39px;top:657.7px;font:42px/50px 'DejaVu Sans Light','DejaVu Sans',sans-serif;color:#222;-webkit-text-stroke:0.5px #222;white-space:nowrap;transform-origin:0 0;transform:scaleX(0.8538);">A</span>
<span style="position:absolute;left:988.30px;top:660.8px;font:31.5px/50px 'DejaVu Sans',sans-serif;color:#222;white-space:nowrap;transform-origin:0 0;transform:scaleX(1.0000);">.</span>
<span style="position:absolute;left:996.27px;top:658.2px;font:44px/50px 'DejaVu Sans',sans-serif;color:#7d9b23;white-space:nowrap;transform-origin:0 0;transform:scaleX(0.8061);">O</span>
<span style="position:absolute;left:1023.84px;top:658.2px;font:44px/50px 'DejaVu Sans',sans-serif;color:#7d9b23;white-space:nowrap;transform-origin:0 0;transform:scaleX(0.6658);">R</span>
<span style="position:absolute;left:1045.96px;top:658.2px;font:44px/50px 'DejaVu Sans',sans-serif;color:#7d9b23;white-space:nowrap;transform-origin:0 0;transform:scaleX(0.7329);">G</span></div></body></html>
